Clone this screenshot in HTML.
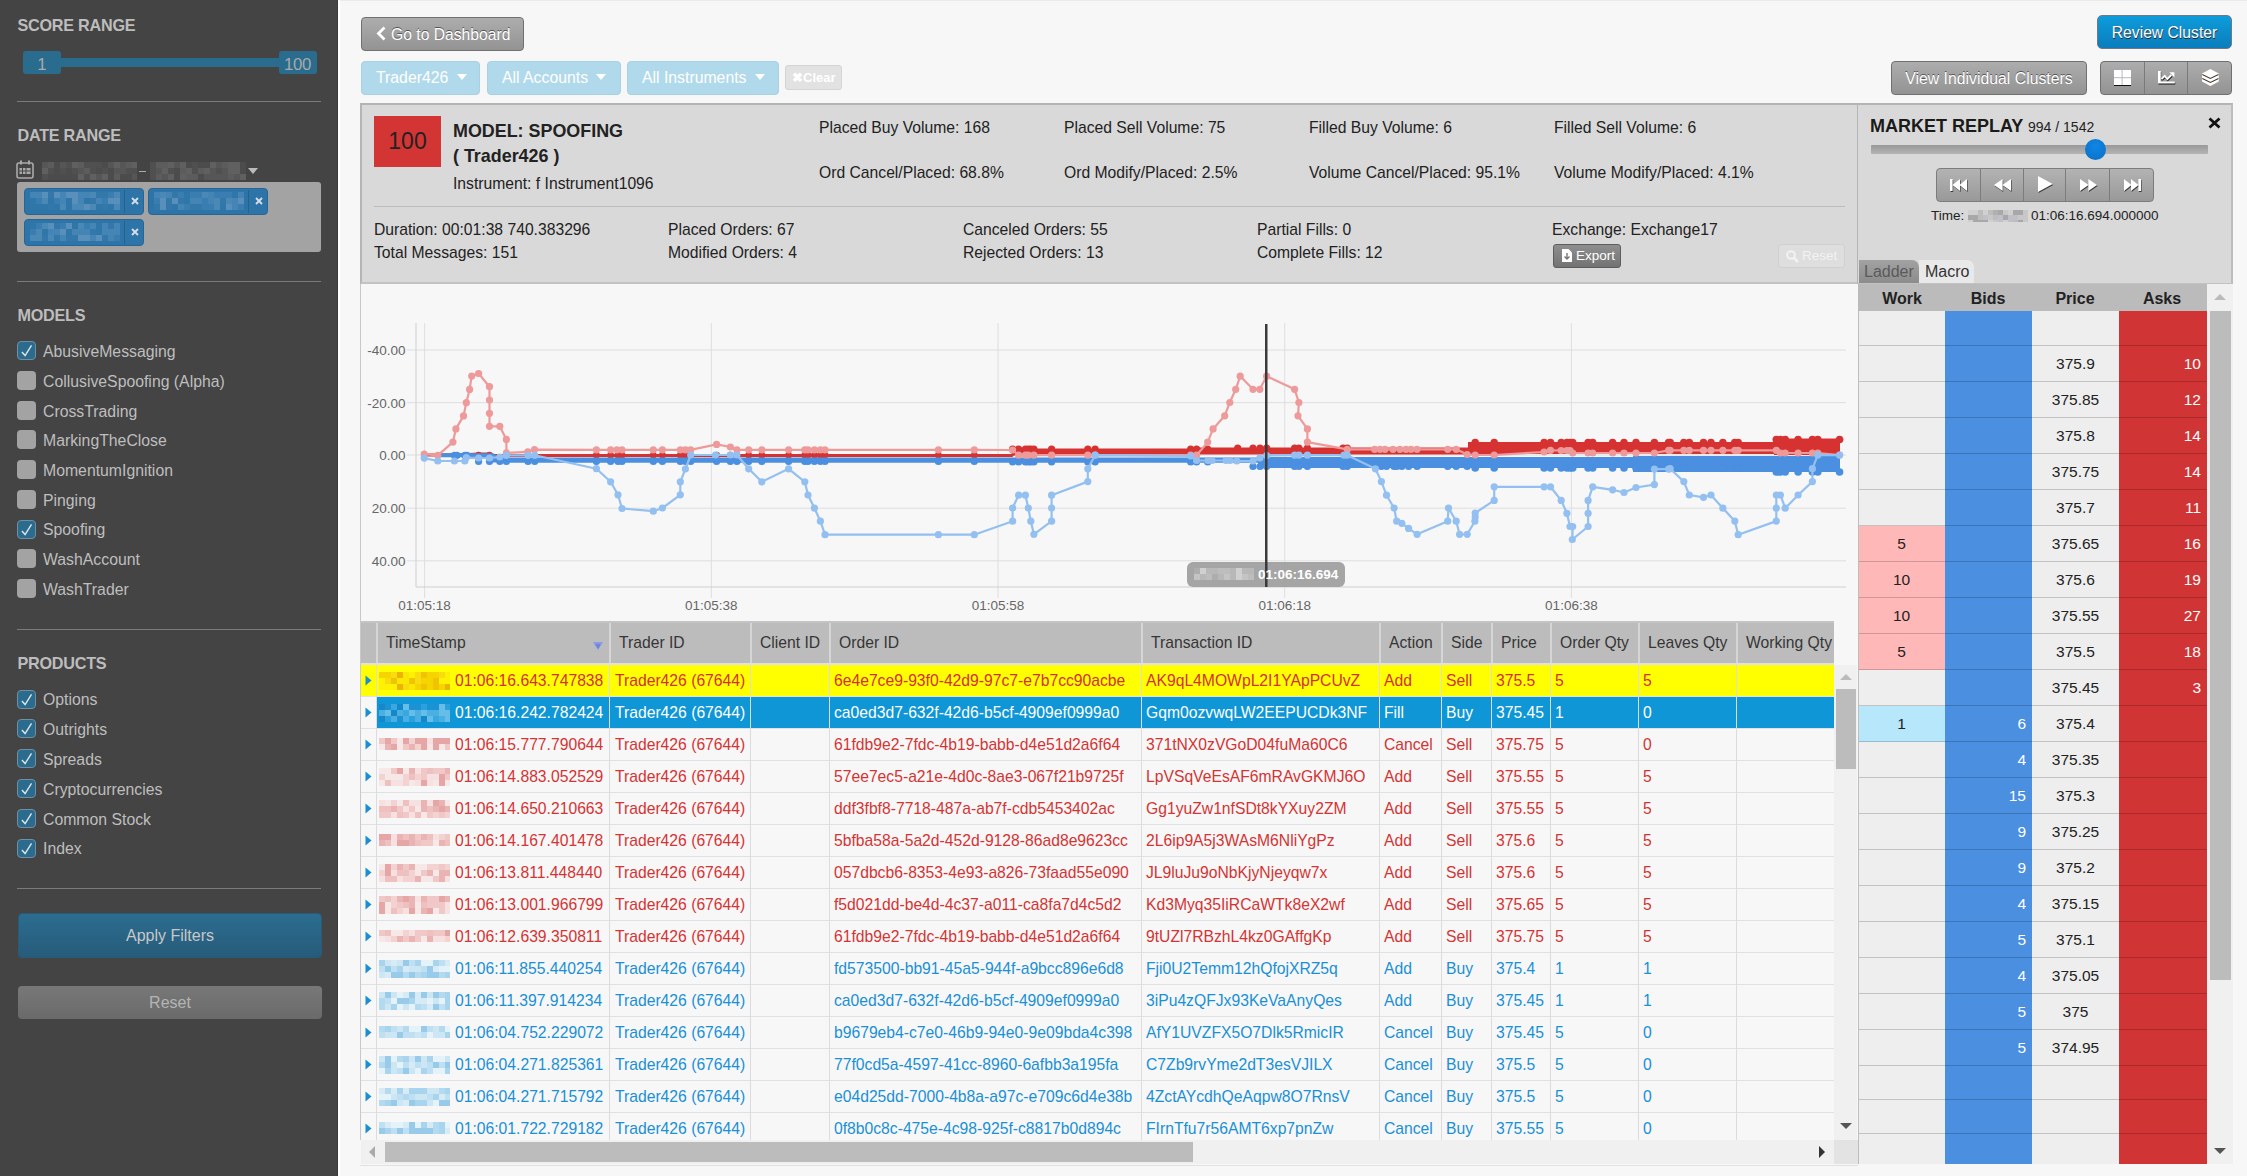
<!DOCTYPE html><html><head><meta charset="utf-8"><style>
*{box-sizing:border-box;margin:0;padding:0}
html,body{width:2247px;height:1176px;overflow:hidden;background:#f7f7f7;font-family:"Liberation Sans",sans-serif;color:#333;position:relative}
.abs{position:absolute}
#side{position:absolute;left:0;top:0;width:338px;height:1176px;background:#444;border-right:1px solid #3a3a3a}
#sideedge{position:absolute;left:338px;top:0;width:2px;height:1176px;background:#fff}
#topline{position:absolute;left:340px;top:0;width:1907px;height:1px;background:#ebebeb}
.sh{position:absolute;left:17.5px;font-weight:bold;font-size:16.2px;color:#bdbdbd;line-height:16px;letter-spacing:-0.25px}
.hr{position:absolute;left:17px;width:304px;height:1px;background:#7a7a7a}
.cb{position:absolute;left:17px;width:19px;height:19px;border-radius:4px;background:#a3a3a3}
.cb.on{background:#2b6c8e;border:1px solid #6f8fa3}
.cb svg{position:absolute;left:-1px;top:-1px}
.cl{position:absolute;left:43px;font-size:15.8px;color:#bebebe;line-height:18px;white-space:nowrap}
.btn{position:absolute;text-align:center;white-space:nowrap}

.gbtn{position:absolute;border:1px solid #707070;border-radius:4px;background:linear-gradient(#adadad,#939393);color:#fff;font-size:16px;text-shadow:0 -1px 0 #555;text-align:center;white-space:nowrap}
.fbtn{position:absolute;border-radius:4px;background:#b0d9ec;border:1px solid #a9d0e3;color:#fff;font-size:15.8px;white-space:nowrap;line-height:32px}
.caret{display:inline-block;width:0;height:0;border-left:5px solid transparent;border-right:5px solid transparent;border-top:6px solid #fff;vertical-align:middle;position:relative;top:-2px}

.st{position:absolute;font-size:15.7px;color:#222;white-space:nowrap;line-height:18px}

.tt{position:absolute;font-size:15.7px;white-space:nowrap;line-height:18px}
</style></head><body>
<div id="side">
<div class="sh" style="top:17px">SCORE RANGE</div>
<div class="abs" style="left:40px;top:58px;width:260px;height:9px;background:#2a6c8e"></div>
<div class="abs" style="left:23px;top:51px;width:38px;height:23px;background:#2a6c8e;border-radius:3px;font-size:16.8px;line-height:27px;text-align:center;color:#a9a9a9">1</div>
<div class="abs" style="left:279px;top:51px;width:38px;height:23px;background:#2a6c8e;border-radius:3px;font-size:16.8px;line-height:27px;text-align:right;padding-right:6px;color:#a9a9a9;letter-spacing:-0.3px">100</div>
<div class="hr" style="top:101px"></div>
<div class="sh" style="top:127px">DATE RANGE</div>
<svg class="abs" style="left:16px;top:160px" width="18" height="19" viewBox="0 0 18 19"><rect x="1" y="3" width="16" height="15" rx="2" fill="none" stroke="#aaa" stroke-width="1.6"/><rect x="4" y="0.5" width="2" height="4" fill="#aaa"/><rect x="12" y="0.5" width="2" height="4" fill="#aaa"/><rect x="3.5" y="8" width="11" height="6" fill="#aaa"/><g fill="#444"><rect x="6" y="8" width="1" height="6"/><rect x="9.5" y="8" width="1" height="6"/><rect x="3.5" y="10.5" width="11" height="1"/></g></svg>
<svg class="abs" style="left:42px;top:162px" width="95" height="18"><rect x="0" y="0" width="6" height="6" fill="#565656"/><rect x="0" y="6" width="6" height="6" fill="#606060"/><rect x="0" y="12" width="6" height="6" fill="#505050"/><rect x="6" y="0" width="6" height="6" fill="#5c5c5c"/><rect x="6" y="6" width="6" height="6" fill="#505050"/><rect x="6" y="12" width="6" height="6" fill="#4c4c4c"/><rect x="12" y="0" width="6" height="6" fill="#4c4c4c"/><rect x="12" y="6" width="6" height="6" fill="#4c4c4c"/><rect x="12" y="12" width="6" height="6" fill="#4c4c4c"/><rect x="18" y="0" width="6" height="6" fill="#565656"/><rect x="18" y="6" width="6" height="6" fill="#505050"/><rect x="18" y="12" width="6" height="6" fill="#4c4c4c"/><rect x="24" y="0" width="6" height="6" fill="#505050"/><rect x="24" y="6" width="6" height="6" fill="#4c4c4c"/><rect x="24" y="12" width="6" height="6" fill="#4c4c4c"/><rect x="30" y="0" width="6" height="6" fill="#606060"/><rect x="30" y="6" width="6" height="6" fill="#505050"/><rect x="30" y="12" width="6" height="6" fill="#4c4c4c"/><rect x="36" y="0" width="6" height="6" fill="#5c5c5c"/><rect x="36" y="6" width="6" height="6" fill="#565656"/><rect x="36" y="12" width="6" height="6" fill="#606060"/><rect x="42" y="0" width="6" height="6" fill="#505050"/><rect x="42" y="6" width="6" height="6" fill="#5c5c5c"/><rect x="42" y="12" width="6" height="6" fill="#505050"/><rect x="48" y="0" width="6" height="6" fill="#505050"/><rect x="48" y="6" width="6" height="6" fill="#505050"/><rect x="48" y="12" width="6" height="6" fill="#606060"/><rect x="54" y="0" width="6" height="6" fill="#505050"/><rect x="54" y="6" width="6" height="6" fill="#4c4c4c"/><rect x="54" y="12" width="6" height="6" fill="#565656"/><rect x="60" y="0" width="6" height="6" fill="#4c4c4c"/><rect x="60" y="6" width="6" height="6" fill="#505050"/><rect x="60" y="12" width="6" height="6" fill="#606060"/><rect x="66" y="0" width="6" height="6" fill="#565656"/><rect x="66" y="6" width="6" height="6" fill="#4c4c4c"/><rect x="66" y="12" width="6" height="6" fill="#4c4c4c"/><rect x="72" y="0" width="6" height="6" fill="#606060"/><rect x="72" y="6" width="6" height="6" fill="#565656"/><rect x="72" y="12" width="6" height="6" fill="#5c5c5c"/><rect x="78" y="0" width="6" height="6" fill="#565656"/><rect x="78" y="6" width="6" height="6" fill="#565656"/><rect x="78" y="12" width="6" height="6" fill="#4c4c4c"/><rect x="84" y="0" width="6" height="6" fill="#5c5c5c"/><rect x="84" y="6" width="6" height="6" fill="#505050"/><rect x="84" y="12" width="6" height="6" fill="#4c4c4c"/><rect x="90" y="0" width="6" height="6" fill="#606060"/><rect x="90" y="6" width="6" height="6" fill="#505050"/><rect x="90" y="12" width="6" height="6" fill="#565656"/></svg>
<div class="abs" style="left:139px;top:171px;width:7px;height:1px;background:#aaa"></div>
<svg class="abs" style="left:150px;top:162px" width="96" height="18"><rect x="0" y="0" width="6" height="6" fill="#505050"/><rect x="0" y="6" width="6" height="6" fill="#505050"/><rect x="0" y="12" width="6" height="6" fill="#505050"/><rect x="6" y="0" width="6" height="6" fill="#5c5c5c"/><rect x="6" y="6" width="6" height="6" fill="#565656"/><rect x="6" y="12" width="6" height="6" fill="#5c5c5c"/><rect x="12" y="0" width="6" height="6" fill="#5c5c5c"/><rect x="12" y="6" width="6" height="6" fill="#606060"/><rect x="12" y="12" width="6" height="6" fill="#565656"/><rect x="18" y="0" width="6" height="6" fill="#606060"/><rect x="18" y="6" width="6" height="6" fill="#505050"/><rect x="18" y="12" width="6" height="6" fill="#606060"/><rect x="24" y="0" width="6" height="6" fill="#565656"/><rect x="24" y="6" width="6" height="6" fill="#4c4c4c"/><rect x="24" y="12" width="6" height="6" fill="#4c4c4c"/><rect x="30" y="0" width="6" height="6" fill="#606060"/><rect x="30" y="6" width="6" height="6" fill="#5c5c5c"/><rect x="30" y="12" width="6" height="6" fill="#606060"/><rect x="36" y="0" width="6" height="6" fill="#4c4c4c"/><rect x="36" y="6" width="6" height="6" fill="#606060"/><rect x="36" y="12" width="6" height="6" fill="#5c5c5c"/><rect x="42" y="0" width="6" height="6" fill="#505050"/><rect x="42" y="6" width="6" height="6" fill="#505050"/><rect x="42" y="12" width="6" height="6" fill="#5c5c5c"/><rect x="48" y="0" width="6" height="6" fill="#4c4c4c"/><rect x="48" y="6" width="6" height="6" fill="#5c5c5c"/><rect x="48" y="12" width="6" height="6" fill="#4c4c4c"/><rect x="54" y="0" width="6" height="6" fill="#4c4c4c"/><rect x="54" y="6" width="6" height="6" fill="#606060"/><rect x="54" y="12" width="6" height="6" fill="#565656"/><rect x="60" y="0" width="6" height="6" fill="#606060"/><rect x="60" y="6" width="6" height="6" fill="#565656"/><rect x="60" y="12" width="6" height="6" fill="#565656"/><rect x="66" y="0" width="6" height="6" fill="#565656"/><rect x="66" y="6" width="6" height="6" fill="#505050"/><rect x="66" y="12" width="6" height="6" fill="#565656"/><rect x="72" y="0" width="6" height="6" fill="#5c5c5c"/><rect x="72" y="6" width="6" height="6" fill="#565656"/><rect x="72" y="12" width="6" height="6" fill="#565656"/><rect x="78" y="0" width="6" height="6" fill="#606060"/><rect x="78" y="6" width="6" height="6" fill="#606060"/><rect x="78" y="12" width="6" height="6" fill="#5c5c5c"/><rect x="84" y="0" width="6" height="6" fill="#606060"/><rect x="84" y="6" width="6" height="6" fill="#606060"/><rect x="84" y="12" width="6" height="6" fill="#565656"/><rect x="90" y="0" width="6" height="6" fill="#4c4c4c"/><rect x="90" y="6" width="6" height="6" fill="#4c4c4c"/><rect x="90" y="12" width="6" height="6" fill="#606060"/></svg>
<div class="abs" style="left:248px;top:168px;width:0;height:0;border-left:5px solid transparent;border-right:5px solid transparent;border-top:6px solid #bbb"></div>
<div class="abs" style="left:17px;top:182px;width:304px;height:70px;background:#a3a3a3;border-radius:3px"></div>
<div class="abs" style="left:24px;top:188px;width:120px;height:27px;background:#2d74a8;border:1px solid #286594;border-radius:4px;"></div><svg class="abs" style="left:30px;top:192px" width="90" height="18"><rect x="0" y="0" width="6" height="6" fill="#4585b5"/><rect x="0" y="6" width="6" height="6" fill="#2f76a9"/><rect x="0" y="12" width="6" height="6" fill="#2f76a9"/><rect x="6" y="0" width="6" height="6" fill="#4585b5"/><rect x="6" y="6" width="6" height="6" fill="#3a7db0"/><rect x="6" y="12" width="6" height="6" fill="#2f76a9"/><rect x="12" y="0" width="6" height="6" fill="#5890bb"/><rect x="12" y="6" width="6" height="6" fill="#4a88b6"/><rect x="12" y="12" width="6" height="6" fill="#2f76a9"/><rect x="18" y="0" width="6" height="6" fill="#3478aa"/><rect x="18" y="6" width="6" height="6" fill="#2f76a9"/><rect x="18" y="12" width="6" height="6" fill="#3478aa"/><rect x="24" y="0" width="6" height="6" fill="#5890bb"/><rect x="24" y="6" width="6" height="6" fill="#3a7db0"/><rect x="24" y="12" width="6" height="6" fill="#2f76a9"/><rect x="30" y="0" width="6" height="6" fill="#4585b5"/><rect x="30" y="6" width="6" height="6" fill="#4585b5"/><rect x="30" y="12" width="6" height="6" fill="#4a88b6"/><rect x="36" y="0" width="6" height="6" fill="#5890bb"/><rect x="36" y="6" width="6" height="6" fill="#2f76a9"/><rect x="36" y="12" width="6" height="6" fill="#2f76a9"/><rect x="42" y="0" width="6" height="6" fill="#5890bb"/><rect x="42" y="6" width="6" height="6" fill="#5890bb"/><rect x="42" y="12" width="6" height="6" fill="#4a88b6"/><rect x="48" y="0" width="6" height="6" fill="#4585b5"/><rect x="48" y="6" width="6" height="6" fill="#4585b5"/><rect x="48" y="12" width="6" height="6" fill="#4a88b6"/><rect x="54" y="0" width="6" height="6" fill="#4585b5"/><rect x="54" y="6" width="6" height="6" fill="#2f76a9"/><rect x="54" y="12" width="6" height="6" fill="#5890bb"/><rect x="60" y="0" width="6" height="6" fill="#4a88b6"/><rect x="60" y="6" width="6" height="6" fill="#3478aa"/><rect x="60" y="12" width="6" height="6" fill="#4a88b6"/><rect x="66" y="0" width="6" height="6" fill="#3478aa"/><rect x="66" y="6" width="6" height="6" fill="#4585b5"/><rect x="66" y="12" width="6" height="6" fill="#2f76a9"/><rect x="72" y="0" width="6" height="6" fill="#3478aa"/><rect x="72" y="6" width="6" height="6" fill="#3a7db0"/><rect x="72" y="12" width="6" height="6" fill="#3478aa"/><rect x="78" y="0" width="6" height="6" fill="#3a7db0"/><rect x="78" y="6" width="6" height="6" fill="#5890bb"/><rect x="78" y="12" width="6" height="6" fill="#2f76a9"/><rect x="84" y="0" width="6" height="6" fill="#4a88b6"/><rect x="84" y="6" width="6" height="6" fill="#5890bb"/><rect x="84" y="12" width="6" height="6" fill="#4a88b6"/></svg><div class="abs" style="left:124px;top:190px;width:1px;height:23px;background:#2a5f88"></div><svg class="abs" style="left:131px;top:197px" width="8" height="8" viewBox="0 0 8 8"><path d="M1 1 L7 7 M7 1 L1 7" stroke="#d6dde4" stroke-width="1.9"/></svg>
<div class="abs" style="left:148px;top:188px;width:120px;height:27px;background:#2d74a8;border:1px solid #286594;border-radius:4px;"></div><svg class="abs" style="left:154px;top:192px" width="90" height="18"><rect x="0" y="0" width="6" height="6" fill="#4585b5"/><rect x="0" y="6" width="6" height="6" fill="#3a7db0"/><rect x="0" y="12" width="6" height="6" fill="#3478aa"/><rect x="6" y="0" width="6" height="6" fill="#4a88b6"/><rect x="6" y="6" width="6" height="6" fill="#5890bb"/><rect x="6" y="12" width="6" height="6" fill="#5890bb"/><rect x="12" y="0" width="6" height="6" fill="#4585b5"/><rect x="12" y="6" width="6" height="6" fill="#3478aa"/><rect x="12" y="12" width="6" height="6" fill="#3478aa"/><rect x="18" y="0" width="6" height="6" fill="#3478aa"/><rect x="18" y="6" width="6" height="6" fill="#5890bb"/><rect x="18" y="12" width="6" height="6" fill="#2f76a9"/><rect x="24" y="0" width="6" height="6" fill="#3a7db0"/><rect x="24" y="6" width="6" height="6" fill="#3478aa"/><rect x="24" y="12" width="6" height="6" fill="#4585b5"/><rect x="30" y="0" width="6" height="6" fill="#2f76a9"/><rect x="30" y="6" width="6" height="6" fill="#2f76a9"/><rect x="30" y="12" width="6" height="6" fill="#3a7db0"/><rect x="36" y="0" width="6" height="6" fill="#3a7db0"/><rect x="36" y="6" width="6" height="6" fill="#4585b5"/><rect x="36" y="12" width="6" height="6" fill="#3478aa"/><rect x="42" y="0" width="6" height="6" fill="#3a7db0"/><rect x="42" y="6" width="6" height="6" fill="#4585b5"/><rect x="42" y="12" width="6" height="6" fill="#3478aa"/><rect x="48" y="0" width="6" height="6" fill="#4a88b6"/><rect x="48" y="6" width="6" height="6" fill="#3a7db0"/><rect x="48" y="12" width="6" height="6" fill="#3a7db0"/><rect x="54" y="0" width="6" height="6" fill="#4585b5"/><rect x="54" y="6" width="6" height="6" fill="#4585b5"/><rect x="54" y="12" width="6" height="6" fill="#3a7db0"/><rect x="60" y="0" width="6" height="6" fill="#3a7db0"/><rect x="60" y="6" width="6" height="6" fill="#4a88b6"/><rect x="60" y="12" width="6" height="6" fill="#4a88b6"/><rect x="66" y="0" width="6" height="6" fill="#3a7db0"/><rect x="66" y="6" width="6" height="6" fill="#3478aa"/><rect x="66" y="12" width="6" height="6" fill="#2f76a9"/><rect x="72" y="0" width="6" height="6" fill="#3a7db0"/><rect x="72" y="6" width="6" height="6" fill="#4a88b6"/><rect x="72" y="12" width="6" height="6" fill="#5890bb"/><rect x="78" y="0" width="6" height="6" fill="#2f76a9"/><rect x="78" y="6" width="6" height="6" fill="#4585b5"/><rect x="78" y="12" width="6" height="6" fill="#4585b5"/><rect x="84" y="0" width="6" height="6" fill="#4585b5"/><rect x="84" y="6" width="6" height="6" fill="#5890bb"/><rect x="84" y="12" width="6" height="6" fill="#3a7db0"/></svg><div class="abs" style="left:248px;top:190px;width:1px;height:23px;background:#2a5f88"></div><svg class="abs" style="left:255px;top:197px" width="8" height="8" viewBox="0 0 8 8"><path d="M1 1 L7 7 M7 1 L1 7" stroke="#d6dde4" stroke-width="1.9"/></svg>
<div class="abs" style="left:24px;top:219px;width:120px;height:27px;background:#2d74a8;border:1px solid #286594;border-radius:4px;"></div><svg class="abs" style="left:30px;top:223px" width="90" height="18"><rect x="0" y="0" width="6" height="6" fill="#2f76a9"/><rect x="0" y="6" width="6" height="6" fill="#3a7db0"/><rect x="0" y="12" width="6" height="6" fill="#4a88b6"/><rect x="6" y="0" width="6" height="6" fill="#3a7db0"/><rect x="6" y="6" width="6" height="6" fill="#4a88b6"/><rect x="6" y="12" width="6" height="6" fill="#4a88b6"/><rect x="12" y="0" width="6" height="6" fill="#4a88b6"/><rect x="12" y="6" width="6" height="6" fill="#2f76a9"/><rect x="12" y="12" width="6" height="6" fill="#3478aa"/><rect x="18" y="0" width="6" height="6" fill="#5890bb"/><rect x="18" y="6" width="6" height="6" fill="#4585b5"/><rect x="18" y="12" width="6" height="6" fill="#4a88b6"/><rect x="24" y="0" width="6" height="6" fill="#3478aa"/><rect x="24" y="6" width="6" height="6" fill="#4585b5"/><rect x="24" y="12" width="6" height="6" fill="#3478aa"/><rect x="30" y="0" width="6" height="6" fill="#3a7db0"/><rect x="30" y="6" width="6" height="6" fill="#5890bb"/><rect x="30" y="12" width="6" height="6" fill="#4585b5"/><rect x="36" y="0" width="6" height="6" fill="#5890bb"/><rect x="36" y="6" width="6" height="6" fill="#2f76a9"/><rect x="36" y="12" width="6" height="6" fill="#3478aa"/><rect x="42" y="0" width="6" height="6" fill="#2f76a9"/><rect x="42" y="6" width="6" height="6" fill="#4585b5"/><rect x="42" y="12" width="6" height="6" fill="#3478aa"/><rect x="48" y="0" width="6" height="6" fill="#4a88b6"/><rect x="48" y="6" width="6" height="6" fill="#4585b5"/><rect x="48" y="12" width="6" height="6" fill="#5890bb"/><rect x="54" y="0" width="6" height="6" fill="#3a7db0"/><rect x="54" y="6" width="6" height="6" fill="#4585b5"/><rect x="54" y="12" width="6" height="6" fill="#5890bb"/><rect x="60" y="0" width="6" height="6" fill="#4585b5"/><rect x="60" y="6" width="6" height="6" fill="#3478aa"/><rect x="60" y="12" width="6" height="6" fill="#4585b5"/><rect x="66" y="0" width="6" height="6" fill="#2f76a9"/><rect x="66" y="6" width="6" height="6" fill="#2f76a9"/><rect x="66" y="12" width="6" height="6" fill="#5890bb"/><rect x="72" y="0" width="6" height="6" fill="#4585b5"/><rect x="72" y="6" width="6" height="6" fill="#4585b5"/><rect x="72" y="12" width="6" height="6" fill="#3478aa"/><rect x="78" y="0" width="6" height="6" fill="#3478aa"/><rect x="78" y="6" width="6" height="6" fill="#4585b5"/><rect x="78" y="12" width="6" height="6" fill="#4585b5"/><rect x="84" y="0" width="6" height="6" fill="#4585b5"/><rect x="84" y="6" width="6" height="6" fill="#4585b5"/><rect x="84" y="12" width="6" height="6" fill="#3a7db0"/></svg><div class="abs" style="left:124px;top:221px;width:1px;height:23px;background:#2a5f88"></div><svg class="abs" style="left:131px;top:228px" width="8" height="8" viewBox="0 0 8 8"><path d="M1 1 L7 7 M7 1 L1 7" stroke="#d6dde4" stroke-width="1.9"/></svg>
<div class="hr" style="top:281px"></div>
<div class="sh" style="top:307px">MODELS</div>
<div class="cb on" style="top:341.3px"><svg width="19" height="19" viewBox="0 0 19 19"><path d="M4.9 11.1 L8.1 14.5 L14.5 4.3" fill="none" stroke="#dfe6ea" stroke-width="1.4"/></svg></div><div class="cl" style="top:343.1px">AbusiveMessaging</div>
<div class="cb" style="top:371.0px"></div><div class="cl" style="top:372.8px">CollusiveSpoofing (Alpha)</div>
<div class="cb" style="top:400.7px"></div><div class="cl" style="top:402.5px">CrossTrading</div>
<div class="cb" style="top:430.4px"></div><div class="cl" style="top:432.2px">MarkingTheClose</div>
<div class="cb" style="top:460.1px"></div><div class="cl" style="top:461.9px">MomentumIgnition</div>
<div class="cb" style="top:489.8px"></div><div class="cl" style="top:491.6px">Pinging</div>
<div class="cb on" style="top:519.5px"><svg width="19" height="19" viewBox="0 0 19 19"><path d="M4.9 11.1 L8.1 14.5 L14.5 4.3" fill="none" stroke="#dfe6ea" stroke-width="1.4"/></svg></div><div class="cl" style="top:521.3px">Spoofing</div>
<div class="cb" style="top:549.2px"></div><div class="cl" style="top:551.0px">WashAccount</div>
<div class="cb" style="top:578.9px"></div><div class="cl" style="top:580.7px">WashTrader</div>
<div class="hr" style="top:629px"></div>
<div class="sh" style="top:655px">PRODUCTS</div>
<div class="cb on" style="top:689.5px"><svg width="19" height="19" viewBox="0 0 19 19"><path d="M4.9 11.1 L8.1 14.5 L14.5 4.3" fill="none" stroke="#dfe6ea" stroke-width="1.4"/></svg></div><div class="cl" style="top:691.3px">Options</div>
<div class="cb on" style="top:719.3px"><svg width="19" height="19" viewBox="0 0 19 19"><path d="M4.9 11.1 L8.1 14.5 L14.5 4.3" fill="none" stroke="#dfe6ea" stroke-width="1.4"/></svg></div><div class="cl" style="top:721.1px">Outrights</div>
<div class="cb on" style="top:749.1px"><svg width="19" height="19" viewBox="0 0 19 19"><path d="M4.9 11.1 L8.1 14.5 L14.5 4.3" fill="none" stroke="#dfe6ea" stroke-width="1.4"/></svg></div><div class="cl" style="top:750.9px">Spreads</div>
<div class="cb on" style="top:778.9px"><svg width="19" height="19" viewBox="0 0 19 19"><path d="M4.9 11.1 L8.1 14.5 L14.5 4.3" fill="none" stroke="#dfe6ea" stroke-width="1.4"/></svg></div><div class="cl" style="top:780.7px">Cryptocurrencies</div>
<div class="cb on" style="top:808.7px"><svg width="19" height="19" viewBox="0 0 19 19"><path d="M4.9 11.1 L8.1 14.5 L14.5 4.3" fill="none" stroke="#dfe6ea" stroke-width="1.4"/></svg></div><div class="cl" style="top:810.5px">Common Stock</div>
<div class="cb on" style="top:838.5px"><svg width="19" height="19" viewBox="0 0 19 19"><path d="M4.9 11.1 L8.1 14.5 L14.5 4.3" fill="none" stroke="#dfe6ea" stroke-width="1.4"/></svg></div><div class="cl" style="top:840.3px">Index</div>
<div class="hr" style="top:888px"></div>
<div class="btn" style="left:18px;top:913px;width:304px;height:45px;border-radius:4px;background:linear-gradient(#2b6d90,#275b7a);border:1px solid #2a5a78;color:#c8c8c8;font-size:16px;line-height:43px">Apply Filters</div>
<div class="btn" style="left:18px;top:986px;width:304px;height:33px;border-radius:4px;background:linear-gradient(#787878,#6a6a6a);color:#b4b4b4;font-size:16px;line-height:34px">Reset</div>
</div>
<div id="sideedge"></div><div id="topline"></div>
<svg class="abs" style="left:0;top:0" width="2247" height="1176" viewBox="0 0 2247 1176"><rect x="360" y="284" width="1" height="337" fill="#c8c8c8"/><rect x="407" y="349.5" width="1439" height="1" fill="#dedede"/><rect x="407" y="402.1" width="1439" height="1" fill="#dedede"/><rect x="407" y="454.5" width="1439" height="1" fill="#dedede"/><rect x="407" y="507.7" width="1439" height="1" fill="#dedede"/><rect x="407" y="560.3" width="1439" height="1" fill="#dedede"/><rect x="424.1" y="323" width="1" height="275" fill="#dedede"/><rect x="710.8" y="323" width="1" height="275" fill="#dedede"/><rect x="997.5" y="323" width="1" height="275" fill="#dedede"/><rect x="1284.2" y="323" width="1" height="275" fill="#dedede"/><rect x="1570.9" y="323" width="1" height="275" fill="#dedede"/><rect x="415.5" y="323" width="1" height="264" fill="#d0d0d0"/><rect x="416" y="586.5" width="1430" height="1" fill="#d0d0d0"/><text x="405.5" y="355" text-anchor="end" font-family="Liberation Sans" font-size="13.5" fill="#666">-40.00</text><text x="405.5" y="407.6" text-anchor="end" font-family="Liberation Sans" font-size="13.5" fill="#666">-20.00</text><text x="405.5" y="460" text-anchor="end" font-family="Liberation Sans" font-size="13.5" fill="#666">0.00</text><text x="405.5" y="513.2" text-anchor="end" font-family="Liberation Sans" font-size="13.5" fill="#666">20.00</text><text x="405.5" y="565.8" text-anchor="end" font-family="Liberation Sans" font-size="13.5" fill="#666">40.00</text><text x="424.6" y="610" text-anchor="middle" font-family="Liberation Sans" font-size="13.5" fill="#666">01:05:18</text><text x="711.3" y="610" text-anchor="middle" font-family="Liberation Sans" font-size="13.5" fill="#666">01:05:38</text><text x="998" y="610" text-anchor="middle" font-family="Liberation Sans" font-size="13.5" fill="#666">01:05:58</text><text x="1284.7" y="610" text-anchor="middle" font-family="Liberation Sans" font-size="13.5" fill="#666">01:06:18</text><text x="1571.4" y="610" text-anchor="middle" font-family="Liberation Sans" font-size="13.5" fill="#666">01:06:38</text><polyline points="424.2,455.0 437.8,455.0 469.0,454.5 478.6,454.1 489.5,454.1 493.0,455.4 1012.0,455.4 1014.0,452.0 1196.0,452.0 1200.0,451.0 1466.0,451.0 1470.0,448.0 1772.0,448.0 1776.0,446.5 1839.6,446.5" fill="none" stroke="#d63232" stroke-width="3" stroke-linejoin="round"/><rect x="1012" y="448.5" width="184" height="7" fill="#d63232"/><rect x="1196" y="447.5" width="272" height="7" fill="#d63232"/><rect x="1468" y="442" width="306" height="12" fill="#d63232"/><rect x="1774" y="438.5" width="66" height="16.5" fill="#d63232"/><circle cx="478.6" cy="455.2" r="3.4" fill="#d63232"/><circle cx="489.5" cy="455.2" r="3.4" fill="#d63232"/><circle cx="596.4" cy="455.2" r="3.4" fill="#d63232"/><circle cx="610.6" cy="455.2" r="3.4" fill="#d63232"/><circle cx="618.0" cy="455.2" r="3.4" fill="#d63232"/><circle cx="622.0" cy="455.2" r="3.4" fill="#d63232"/><circle cx="653.3" cy="455.2" r="3.4" fill="#d63232"/><circle cx="662.4" cy="455.2" r="3.4" fill="#d63232"/><circle cx="680.3" cy="455.2" r="3.4" fill="#d63232"/><circle cx="685.4" cy="455.2" r="3.4" fill="#d63232"/><circle cx="690.7" cy="455.2" r="3.4" fill="#d63232"/><circle cx="716.6" cy="455.2" r="3.4" fill="#d63232"/><circle cx="730.4" cy="455.2" r="3.4" fill="#d63232"/><circle cx="736.9" cy="455.2" r="3.4" fill="#d63232"/><circle cx="748.7" cy="455.2" r="3.4" fill="#d63232"/><circle cx="761.8" cy="455.2" r="3.4" fill="#d63232"/><circle cx="788.6" cy="455.2" r="3.4" fill="#d63232"/><circle cx="804.8" cy="455.2" r="3.4" fill="#d63232"/><circle cx="808.0" cy="455.2" r="3.4" fill="#d63232"/><circle cx="814.4" cy="455.2" r="3.4" fill="#d63232"/><circle cx="820.4" cy="455.2" r="3.4" fill="#d63232"/><circle cx="825.0" cy="455.2" r="3.4" fill="#d63232"/><circle cx="938.4" cy="455.2" r="3.4" fill="#d63232"/><circle cx="974.3" cy="455.2" r="3.4" fill="#d63232"/><circle cx="1012.6" cy="449.0" r="3.6" fill="#d63232"/><circle cx="1018.6" cy="449.0" r="3.6" fill="#d63232"/><circle cx="1025.4" cy="449.0" r="3.6" fill="#d63232"/><circle cx="1028.3" cy="449.0" r="3.6" fill="#d63232"/><circle cx="1030.8" cy="449.0" r="3.6" fill="#d63232"/><circle cx="1033.9" cy="449.0" r="3.6" fill="#d63232"/><circle cx="1051.6" cy="449.0" r="3.6" fill="#d63232"/><circle cx="1087.8" cy="449.0" r="3.6" fill="#d63232"/><circle cx="1095.1" cy="449.0" r="3.6" fill="#d63232"/><circle cx="1190.7" cy="449.0" r="3.6" fill="#d63232"/><circle cx="1196.6" cy="449.0" r="3.6" fill="#d63232"/><circle cx="1207.7" cy="449.0" r="3.6" fill="#d63232"/><circle cx="1237.7" cy="448.0" r="3.6" fill="#d63232"/><circle cx="1253.0" cy="448.0" r="3.6" fill="#d63232"/><circle cx="1260.0" cy="448.0" r="3.6" fill="#d63232"/><circle cx="1266.6" cy="448.0" r="3.6" fill="#d63232"/><circle cx="1294.6" cy="448.0" r="3.6" fill="#d63232"/><circle cx="1298.9" cy="448.0" r="3.6" fill="#d63232"/><circle cx="1307.4" cy="448.0" r="3.6" fill="#d63232"/><circle cx="1343.0" cy="448.0" r="3.6" fill="#d63232"/><circle cx="1347.3" cy="448.0" r="3.6" fill="#d63232"/><circle cx="1475.2" cy="442.5" r="3.8" fill="#d63232"/><circle cx="1494.2" cy="442.5" r="3.8" fill="#d63232"/><circle cx="1544.1" cy="442.5" r="3.8" fill="#d63232"/><circle cx="1550.5" cy="442.5" r="3.8" fill="#d63232"/><circle cx="1561.2" cy="442.5" r="3.8" fill="#d63232"/><circle cx="1566.9" cy="442.5" r="3.8" fill="#d63232"/><circle cx="1570.0" cy="442.5" r="3.8" fill="#d63232"/><circle cx="1572.7" cy="442.5" r="3.8" fill="#d63232"/><circle cx="1588.1" cy="442.5" r="3.8" fill="#d63232"/><circle cx="1592.7" cy="442.5" r="3.8" fill="#d63232"/><circle cx="1612.6" cy="442.5" r="3.8" fill="#d63232"/><circle cx="1624.0" cy="442.5" r="3.8" fill="#d63232"/><circle cx="1636.0" cy="442.5" r="3.8" fill="#d63232"/><circle cx="1654.4" cy="442.5" r="3.8" fill="#d63232"/><circle cx="1668.6" cy="442.5" r="3.8" fill="#d63232"/><circle cx="1670.2" cy="442.5" r="3.8" fill="#d63232"/><circle cx="1683.8" cy="442.5" r="3.8" fill="#d63232"/><circle cx="1689.3" cy="442.5" r="3.8" fill="#d63232"/><circle cx="1703.5" cy="442.5" r="3.8" fill="#d63232"/><circle cx="1711.0" cy="442.5" r="3.8" fill="#d63232"/><circle cx="1722.9" cy="442.5" r="3.8" fill="#d63232"/><circle cx="1734.8" cy="442.5" r="3.8" fill="#d63232"/><circle cx="1738.2" cy="442.5" r="3.8" fill="#d63232"/><circle cx="1776.3" cy="439.5" r="3.8" fill="#d63232"/><circle cx="1780.4" cy="439.5" r="3.8" fill="#d63232"/><circle cx="1785.2" cy="439.5" r="3.8" fill="#d63232"/><circle cx="1798.1" cy="439.5" r="3.8" fill="#d63232"/><circle cx="1812.4" cy="439.5" r="3.8" fill="#d63232"/><circle cx="1817.8" cy="439.5" r="3.8" fill="#d63232"/><circle cx="1839.6" cy="439.5" r="3.8" fill="#d63232"/><polyline points="437.8,455.3 493.0,455.3 499.8,460.5 1258.0,460.5" fill="none" stroke="#4a8fe0" stroke-width="4" stroke-linejoin="round"/><rect x="493" y="457.5" width="765" height="5" fill="#4a8fe0"/><rect x="1258" y="457" width="375" height="11" fill="#4a8fe0"/><polygon points="1633,456 1840,456 1840,472 1633,472 1633,468" fill="#4a8fe0"/><circle cx="454.4" cy="455.3" r="3.6" fill="#4a8fe0"/><circle cx="457.0" cy="455.3" r="3.6" fill="#4a8fe0"/><circle cx="464.8" cy="455.3" r="3.6" fill="#4a8fe0"/><circle cx="467.0" cy="455.3" r="3.6" fill="#4a8fe0"/><circle cx="478.6" cy="461.5" r="3.6" fill="#4a8fe0"/><circle cx="489.5" cy="461.5" r="3.6" fill="#4a8fe0"/><circle cx="596.4" cy="461.5" r="3.6" fill="#4a8fe0"/><circle cx="610.6" cy="461.5" r="3.6" fill="#4a8fe0"/><circle cx="618.0" cy="461.5" r="3.6" fill="#4a8fe0"/><circle cx="622.0" cy="461.5" r="3.6" fill="#4a8fe0"/><circle cx="653.3" cy="461.5" r="3.6" fill="#4a8fe0"/><circle cx="662.4" cy="461.5" r="3.6" fill="#4a8fe0"/><circle cx="680.3" cy="461.5" r="3.6" fill="#4a8fe0"/><circle cx="685.4" cy="461.5" r="3.6" fill="#4a8fe0"/><circle cx="690.7" cy="461.5" r="3.6" fill="#4a8fe0"/><circle cx="716.6" cy="461.5" r="3.6" fill="#4a8fe0"/><circle cx="730.4" cy="461.5" r="3.6" fill="#4a8fe0"/><circle cx="736.9" cy="461.5" r="3.6" fill="#4a8fe0"/><circle cx="748.7" cy="461.5" r="3.6" fill="#4a8fe0"/><circle cx="761.8" cy="461.5" r="3.6" fill="#4a8fe0"/><circle cx="788.6" cy="461.5" r="3.6" fill="#4a8fe0"/><circle cx="804.8" cy="461.5" r="3.6" fill="#4a8fe0"/><circle cx="808.0" cy="461.5" r="3.6" fill="#4a8fe0"/><circle cx="814.4" cy="461.5" r="3.6" fill="#4a8fe0"/><circle cx="820.4" cy="461.5" r="3.6" fill="#4a8fe0"/><circle cx="825.0" cy="461.5" r="3.6" fill="#4a8fe0"/><circle cx="938.4" cy="461.5" r="3.6" fill="#4a8fe0"/><circle cx="974.3" cy="461.5" r="3.6" fill="#4a8fe0"/><circle cx="499.8" cy="461.5" r="3.6" fill="#4a8fe0"/><circle cx="506.4" cy="461.5" r="3.6" fill="#4a8fe0"/><circle cx="528.0" cy="461.5" r="3.6" fill="#4a8fe0"/><circle cx="534.7" cy="461.5" r="3.6" fill="#4a8fe0"/><circle cx="1012.6" cy="462.0" r="3.6" fill="#4a8fe0"/><circle cx="1018.6" cy="462.0" r="3.6" fill="#4a8fe0"/><circle cx="1025.4" cy="462.0" r="3.6" fill="#4a8fe0"/><circle cx="1028.3" cy="462.0" r="3.6" fill="#4a8fe0"/><circle cx="1030.8" cy="462.0" r="3.6" fill="#4a8fe0"/><circle cx="1033.9" cy="462.0" r="3.6" fill="#4a8fe0"/><circle cx="1051.6" cy="462.0" r="3.6" fill="#4a8fe0"/><circle cx="1087.8" cy="462.0" r="3.6" fill="#4a8fe0"/><circle cx="1095.1" cy="462.0" r="3.6" fill="#4a8fe0"/><circle cx="1190.7" cy="462.0" r="3.6" fill="#4a8fe0"/><circle cx="1196.6" cy="462.0" r="3.6" fill="#4a8fe0"/><circle cx="1207.7" cy="462.0" r="3.6" fill="#4a8fe0"/><circle cx="1253.0" cy="466.5" r="3.6" fill="#4a8fe0"/><circle cx="1260.0" cy="466.5" r="3.6" fill="#4a8fe0"/><circle cx="1266.6" cy="466.5" r="3.6" fill="#4a8fe0"/><circle cx="1294.6" cy="466.5" r="3.6" fill="#4a8fe0"/><circle cx="1298.9" cy="466.5" r="3.6" fill="#4a8fe0"/><circle cx="1307.4" cy="466.5" r="3.6" fill="#4a8fe0"/><circle cx="1343.0" cy="466.5" r="3.6" fill="#4a8fe0"/><circle cx="1347.3" cy="466.5" r="3.6" fill="#4a8fe0"/><circle cx="1375.4" cy="466.5" r="3.6" fill="#4a8fe0"/><circle cx="1381.4" cy="466.5" r="3.6" fill="#4a8fe0"/><circle cx="1386.5" cy="466.5" r="3.6" fill="#4a8fe0"/><circle cx="1394.1" cy="466.5" r="3.6" fill="#4a8fe0"/><circle cx="1396.7" cy="466.5" r="3.6" fill="#4a8fe0"/><circle cx="1401.8" cy="466.5" r="3.6" fill="#4a8fe0"/><circle cx="1408.6" cy="466.5" r="3.6" fill="#4a8fe0"/><circle cx="1417.1" cy="466.5" r="3.6" fill="#4a8fe0"/><circle cx="1447.7" cy="466.5" r="3.6" fill="#4a8fe0"/><circle cx="1456.2" cy="466.5" r="3.6" fill="#4a8fe0"/><circle cx="1467.2" cy="466.5" r="3.6" fill="#4a8fe0"/><circle cx="1475.2" cy="468.0" r="3.8" fill="#4a8fe0"/><circle cx="1494.2" cy="468.0" r="3.8" fill="#4a8fe0"/><circle cx="1544.1" cy="468.0" r="3.8" fill="#4a8fe0"/><circle cx="1550.5" cy="468.0" r="3.8" fill="#4a8fe0"/><circle cx="1561.2" cy="468.0" r="3.8" fill="#4a8fe0"/><circle cx="1566.9" cy="468.0" r="3.8" fill="#4a8fe0"/><circle cx="1570.0" cy="468.0" r="3.8" fill="#4a8fe0"/><circle cx="1572.7" cy="468.0" r="3.8" fill="#4a8fe0"/><circle cx="1588.1" cy="468.0" r="3.8" fill="#4a8fe0"/><circle cx="1592.7" cy="468.0" r="3.8" fill="#4a8fe0"/><circle cx="1612.6" cy="468.0" r="3.8" fill="#4a8fe0"/><circle cx="1624.0" cy="468.0" r="3.8" fill="#4a8fe0"/><circle cx="1636.0" cy="468.0" r="3.8" fill="#4a8fe0"/><circle cx="1654.4" cy="468.0" r="3.8" fill="#4a8fe0"/><circle cx="1668.6" cy="468.0" r="3.8" fill="#4a8fe0"/><circle cx="1670.2" cy="468.0" r="3.8" fill="#4a8fe0"/><circle cx="1683.8" cy="468.0" r="3.8" fill="#4a8fe0"/><circle cx="1689.3" cy="468.0" r="3.8" fill="#4a8fe0"/><circle cx="1703.5" cy="468.0" r="3.8" fill="#4a8fe0"/><circle cx="1711.0" cy="468.0" r="3.8" fill="#4a8fe0"/><circle cx="1722.9" cy="468.0" r="3.8" fill="#4a8fe0"/><circle cx="1734.8" cy="468.0" r="3.8" fill="#4a8fe0"/><circle cx="1738.2" cy="468.0" r="3.8" fill="#4a8fe0"/><circle cx="1776.3" cy="472.0" r="3.8" fill="#4a8fe0"/><circle cx="1780.4" cy="472.0" r="3.8" fill="#4a8fe0"/><circle cx="1785.2" cy="472.0" r="3.8" fill="#4a8fe0"/><circle cx="1798.1" cy="472.0" r="3.8" fill="#4a8fe0"/><circle cx="1812.4" cy="472.0" r="3.8" fill="#4a8fe0"/><circle cx="1817.8" cy="472.0" r="3.8" fill="#4a8fe0"/><circle cx="1839.6" cy="472.0" r="3.8" fill="#4a8fe0"/><polyline points="424.2,454.1 437.8,455.3 452.9,442.1 455.9,428.9 463.5,415.9 466.3,402.7 469.6,389.4 471.7,376.1 478.6,373.5 489.5,386.7 489.5,400.0 489.5,413.3 489.5,426.3 499.8,426.3 506.4,439.4 506.4,452.9 527.8,451.8 534.5,449.6 596.4,449.8 610.6,449.8 617.0,449.8 622.0,449.8 653.3,449.8 662.4,449.8 680.3,449.8 685.4,449.8 690.7,449.8 716.6,444.4 730.4,447.0 736.9,449.8 748.7,449.8 761.8,449.8 788.6,449.8 804.8,449.8 808.0,449.8 814.4,449.8 820.4,449.8 825.0,449.8 938.4,449.8 974.3,449.8 1012.6,450.0 1018.6,455.2 1025.4,455.2 1028.3,455.2 1033.9,455.2 1051.6,455.2 1087.8,455.2 1095.1,455.2 1190.7,455.2 1196.6,455.2 1207.7,442.1 1213.1,428.9 1224.7,415.8 1229.8,402.5 1235.7,389.3 1240.2,376.2 1253.0,389.3 1259.8,389.3 1266.6,376.2 1294.6,389.3 1298.9,402.5 1298.0,415.8 1307.4,428.9 1307.4,442.1 1347.3,449.3 1374.6,449.3 1380.0,449.3 1385.0,449.3 1393.0,449.3 1400.0,449.3 1406.0,449.3 1411.0,449.3 1417.0,449.3 1447.7,449.3 1456.2,449.3 1467.2,454.5 1475.2,455.0 1494.2,455.0 1544.1,452.0 1550.5,450.3 1561.2,450.5 1566.9,450.5 1570.0,450.5 1572.7,453.0 1588.1,453.0 1592.7,453.0 1612.6,453.0 1624.0,453.0 1636.0,453.0 1654.4,453.0 1668.6,450.3 1670.2,450.3 1683.8,450.3 1689.3,450.3 1703.5,450.3 1711.0,450.3 1722.9,450.3 1734.8,450.3 1738.2,450.3 1776.3,450.3 1780.4,453.0 1785.2,453.0 1798.1,453.0 1812.4,453.0 1817.8,453.0 1839.6,455.0" fill="none" stroke="#ee9a9a" stroke-width="2.2" stroke-linejoin="round"/><circle cx="424.2" cy="454.1" r="3.6" fill="#ee9a9a"/><circle cx="437.8" cy="455.3" r="3.6" fill="#ee9a9a"/><circle cx="452.9" cy="442.1" r="3.6" fill="#ee9a9a"/><circle cx="455.9" cy="428.9" r="3.6" fill="#ee9a9a"/><circle cx="463.5" cy="415.9" r="3.6" fill="#ee9a9a"/><circle cx="466.3" cy="402.7" r="3.6" fill="#ee9a9a"/><circle cx="469.6" cy="389.4" r="3.6" fill="#ee9a9a"/><circle cx="471.7" cy="376.1" r="3.6" fill="#ee9a9a"/><circle cx="478.6" cy="373.5" r="3.6" fill="#ee9a9a"/><circle cx="489.5" cy="386.7" r="3.6" fill="#ee9a9a"/><circle cx="489.5" cy="400.0" r="3.6" fill="#ee9a9a"/><circle cx="489.5" cy="413.3" r="3.6" fill="#ee9a9a"/><circle cx="489.5" cy="426.3" r="3.6" fill="#ee9a9a"/><circle cx="499.8" cy="426.3" r="3.6" fill="#ee9a9a"/><circle cx="506.4" cy="439.4" r="3.6" fill="#ee9a9a"/><circle cx="506.4" cy="452.9" r="3.6" fill="#ee9a9a"/><circle cx="527.8" cy="451.8" r="3.6" fill="#ee9a9a"/><circle cx="534.5" cy="449.6" r="3.6" fill="#ee9a9a"/><circle cx="596.4" cy="449.8" r="3.6" fill="#ee9a9a"/><circle cx="610.6" cy="449.8" r="3.6" fill="#ee9a9a"/><circle cx="617.0" cy="449.8" r="3.6" fill="#ee9a9a"/><circle cx="622.0" cy="449.8" r="3.6" fill="#ee9a9a"/><circle cx="653.3" cy="449.8" r="3.6" fill="#ee9a9a"/><circle cx="662.4" cy="449.8" r="3.6" fill="#ee9a9a"/><circle cx="680.3" cy="449.8" r="3.6" fill="#ee9a9a"/><circle cx="685.4" cy="449.8" r="3.6" fill="#ee9a9a"/><circle cx="690.7" cy="449.8" r="3.6" fill="#ee9a9a"/><circle cx="716.6" cy="444.4" r="3.6" fill="#ee9a9a"/><circle cx="730.4" cy="447.0" r="3.6" fill="#ee9a9a"/><circle cx="736.9" cy="449.8" r="3.6" fill="#ee9a9a"/><circle cx="748.7" cy="449.8" r="3.6" fill="#ee9a9a"/><circle cx="761.8" cy="449.8" r="3.6" fill="#ee9a9a"/><circle cx="788.6" cy="449.8" r="3.6" fill="#ee9a9a"/><circle cx="804.8" cy="449.8" r="3.6" fill="#ee9a9a"/><circle cx="808.0" cy="449.8" r="3.6" fill="#ee9a9a"/><circle cx="814.4" cy="449.8" r="3.6" fill="#ee9a9a"/><circle cx="820.4" cy="449.8" r="3.6" fill="#ee9a9a"/><circle cx="825.0" cy="449.8" r="3.6" fill="#ee9a9a"/><circle cx="938.4" cy="449.8" r="3.6" fill="#ee9a9a"/><circle cx="974.3" cy="449.8" r="3.6" fill="#ee9a9a"/><circle cx="1012.6" cy="450.0" r="3.6" fill="#ee9a9a"/><circle cx="1018.6" cy="455.2" r="3.6" fill="#ee9a9a"/><circle cx="1025.4" cy="455.2" r="3.6" fill="#ee9a9a"/><circle cx="1028.3" cy="455.2" r="3.6" fill="#ee9a9a"/><circle cx="1033.9" cy="455.2" r="3.6" fill="#ee9a9a"/><circle cx="1051.6" cy="455.2" r="3.6" fill="#ee9a9a"/><circle cx="1087.8" cy="455.2" r="3.6" fill="#ee9a9a"/><circle cx="1095.1" cy="455.2" r="3.6" fill="#ee9a9a"/><circle cx="1190.7" cy="455.2" r="3.6" fill="#ee9a9a"/><circle cx="1196.6" cy="455.2" r="3.6" fill="#ee9a9a"/><circle cx="1207.7" cy="442.1" r="3.6" fill="#ee9a9a"/><circle cx="1213.1" cy="428.9" r="3.6" fill="#ee9a9a"/><circle cx="1224.7" cy="415.8" r="3.6" fill="#ee9a9a"/><circle cx="1229.8" cy="402.5" r="3.6" fill="#ee9a9a"/><circle cx="1235.7" cy="389.3" r="3.6" fill="#ee9a9a"/><circle cx="1240.2" cy="376.2" r="3.6" fill="#ee9a9a"/><circle cx="1253.0" cy="389.3" r="3.6" fill="#ee9a9a"/><circle cx="1259.8" cy="389.3" r="3.6" fill="#ee9a9a"/><circle cx="1266.6" cy="376.2" r="3.6" fill="#ee9a9a"/><circle cx="1294.6" cy="389.3" r="3.6" fill="#ee9a9a"/><circle cx="1298.9" cy="402.5" r="3.6" fill="#ee9a9a"/><circle cx="1298.0" cy="415.8" r="3.6" fill="#ee9a9a"/><circle cx="1307.4" cy="428.9" r="3.6" fill="#ee9a9a"/><circle cx="1307.4" cy="442.1" r="3.6" fill="#ee9a9a"/><circle cx="1347.3" cy="449.3" r="3.6" fill="#ee9a9a"/><circle cx="1374.6" cy="449.3" r="3.6" fill="#ee9a9a"/><circle cx="1380.0" cy="449.3" r="3.6" fill="#ee9a9a"/><circle cx="1385.0" cy="449.3" r="3.6" fill="#ee9a9a"/><circle cx="1393.0" cy="449.3" r="3.6" fill="#ee9a9a"/><circle cx="1400.0" cy="449.3" r="3.6" fill="#ee9a9a"/><circle cx="1406.0" cy="449.3" r="3.6" fill="#ee9a9a"/><circle cx="1411.0" cy="449.3" r="3.6" fill="#ee9a9a"/><circle cx="1417.0" cy="449.3" r="3.6" fill="#ee9a9a"/><circle cx="1447.7" cy="449.3" r="3.6" fill="#ee9a9a"/><circle cx="1456.2" cy="449.3" r="3.6" fill="#ee9a9a"/><circle cx="1467.2" cy="454.5" r="3.6" fill="#ee9a9a"/><circle cx="1475.2" cy="455.0" r="3.6" fill="#ee9a9a"/><circle cx="1494.2" cy="455.0" r="3.6" fill="#ee9a9a"/><circle cx="1544.1" cy="452.0" r="3.6" fill="#ee9a9a"/><circle cx="1550.5" cy="450.3" r="3.6" fill="#ee9a9a"/><circle cx="1561.2" cy="450.5" r="3.6" fill="#ee9a9a"/><circle cx="1566.9" cy="450.5" r="3.6" fill="#ee9a9a"/><circle cx="1570.0" cy="450.5" r="3.6" fill="#ee9a9a"/><circle cx="1572.7" cy="453.0" r="3.6" fill="#ee9a9a"/><circle cx="1588.1" cy="453.0" r="3.6" fill="#ee9a9a"/><circle cx="1592.7" cy="453.0" r="3.6" fill="#ee9a9a"/><circle cx="1612.6" cy="453.0" r="3.6" fill="#ee9a9a"/><circle cx="1624.0" cy="453.0" r="3.6" fill="#ee9a9a"/><circle cx="1636.0" cy="453.0" r="3.6" fill="#ee9a9a"/><circle cx="1654.4" cy="453.0" r="3.6" fill="#ee9a9a"/><circle cx="1668.6" cy="450.3" r="3.6" fill="#ee9a9a"/><circle cx="1670.2" cy="450.3" r="3.6" fill="#ee9a9a"/><circle cx="1683.8" cy="450.3" r="3.6" fill="#ee9a9a"/><circle cx="1689.3" cy="450.3" r="3.6" fill="#ee9a9a"/><circle cx="1703.5" cy="450.3" r="3.6" fill="#ee9a9a"/><circle cx="1711.0" cy="450.3" r="3.6" fill="#ee9a9a"/><circle cx="1722.9" cy="450.3" r="3.6" fill="#ee9a9a"/><circle cx="1734.8" cy="450.3" r="3.6" fill="#ee9a9a"/><circle cx="1738.2" cy="450.3" r="3.6" fill="#ee9a9a"/><circle cx="1776.3" cy="450.3" r="3.6" fill="#ee9a9a"/><circle cx="1780.4" cy="453.0" r="3.6" fill="#ee9a9a"/><circle cx="1785.2" cy="453.0" r="3.6" fill="#ee9a9a"/><circle cx="1798.1" cy="453.0" r="3.6" fill="#ee9a9a"/><circle cx="1812.4" cy="453.0" r="3.6" fill="#ee9a9a"/><circle cx="1817.8" cy="453.0" r="3.6" fill="#ee9a9a"/><circle cx="1839.6" cy="455.0" r="3.6" fill="#ee9a9a"/><polyline points="424.2,458.1 437.8,461.0 454.4,461.0 464.8,461.0 466.3,457.6 478.6,458.0 489.5,458.0 499.8,457.0 506.4,455.3 528.0,455.3 534.7,455.3 596.4,468.7 610.6,481.8 618.0,494.8 622.0,508.5 653.3,511.2 662.4,508.0 680.3,494.8 680.3,481.8 685.4,469.0 690.7,455.0 715.5,455.0 730.4,455.0 736.9,455.0 748.7,468.8 761.8,481.8 788.6,468.8 804.8,481.8 808.0,495.0 814.4,508.1 820.4,521.2 825.0,534.7 938.4,534.7 974.3,534.7 1012.6,521.2 1012.6,508.0 1018.6,495.2 1025.4,495.2 1028.3,508.0 1030.8,521.2 1033.9,534.3 1051.6,521.2 1051.6,508.0 1051.6,495.2 1087.8,481.6 1087.8,468.8 1095.1,455.2 1190.7,456.0 1196.6,460.5 1208.0,460.5 1212.0,460.5 1226.0,460.5 1230.0,460.5 1236.8,461.0 1253.0,461.0 1259.8,458.0 1266.6,455.5 1294.6,455.2 1298.9,455.2 1307.4,455.2 1344.0,455.2 1347.3,455.2 1375.4,468.8 1381.4,481.6 1386.5,495.2 1394.1,508.0 1396.7,521.2 1401.8,523.3 1408.6,528.4 1417.1,534.3 1447.7,521.2 1448.5,508.0 1456.2,521.2 1459.6,534.3 1467.2,534.3 1474.9,521.2 1475.2,517.0 1475.2,513.0 1494.2,500.4 1494.2,486.8 1544.1,486.8 1550.5,486.8 1561.2,500.4 1566.9,513.3 1570.0,526.5 1572.7,526.5 1572.3,539.5 1588.1,526.5 1588.1,513.3 1588.1,500.4 1592.7,486.8 1612.6,489.8 1624.0,492.5 1636.0,487.5 1654.4,484.6 1654.4,469.1 1668.6,469.1 1670.2,468.7 1683.8,481.6 1689.3,495.0 1703.5,497.3 1711.0,495.0 1722.9,508.2 1734.8,521.1 1738.2,534.7 1776.3,521.1 1776.3,508.2 1776.3,495.0 1780.4,495.0 1785.2,508.2 1798.1,495.0 1812.4,481.6 1812.4,468.7 1817.8,455.1 1839.6,455.1" fill="none" stroke="#93c0f1" stroke-width="2.2" stroke-linejoin="round"/><circle cx="424.2" cy="458.1" r="3.6" fill="#93c0f1"/><circle cx="437.8" cy="461.0" r="3.6" fill="#93c0f1"/><circle cx="454.4" cy="461.0" r="3.6" fill="#93c0f1"/><circle cx="464.8" cy="461.0" r="3.6" fill="#93c0f1"/><circle cx="466.3" cy="457.6" r="3.6" fill="#93c0f1"/><circle cx="478.6" cy="458.0" r="3.6" fill="#93c0f1"/><circle cx="489.5" cy="458.0" r="3.6" fill="#93c0f1"/><circle cx="499.8" cy="457.0" r="3.6" fill="#93c0f1"/><circle cx="506.4" cy="455.3" r="3.6" fill="#93c0f1"/><circle cx="528.0" cy="455.3" r="3.6" fill="#93c0f1"/><circle cx="534.7" cy="455.3" r="3.6" fill="#93c0f1"/><circle cx="596.4" cy="468.7" r="3.6" fill="#93c0f1"/><circle cx="610.6" cy="481.8" r="3.6" fill="#93c0f1"/><circle cx="618.0" cy="494.8" r="3.6" fill="#93c0f1"/><circle cx="622.0" cy="508.5" r="3.6" fill="#93c0f1"/><circle cx="653.3" cy="511.2" r="3.6" fill="#93c0f1"/><circle cx="662.4" cy="508.0" r="3.6" fill="#93c0f1"/><circle cx="680.3" cy="494.8" r="3.6" fill="#93c0f1"/><circle cx="680.3" cy="481.8" r="3.6" fill="#93c0f1"/><circle cx="685.4" cy="469.0" r="3.6" fill="#93c0f1"/><circle cx="690.7" cy="455.0" r="3.6" fill="#93c0f1"/><circle cx="715.5" cy="455.0" r="3.6" fill="#93c0f1"/><circle cx="730.4" cy="455.0" r="3.6" fill="#93c0f1"/><circle cx="736.9" cy="455.0" r="3.6" fill="#93c0f1"/><circle cx="748.7" cy="468.8" r="3.6" fill="#93c0f1"/><circle cx="761.8" cy="481.8" r="3.6" fill="#93c0f1"/><circle cx="788.6" cy="468.8" r="3.6" fill="#93c0f1"/><circle cx="804.8" cy="481.8" r="3.6" fill="#93c0f1"/><circle cx="808.0" cy="495.0" r="3.6" fill="#93c0f1"/><circle cx="814.4" cy="508.1" r="3.6" fill="#93c0f1"/><circle cx="820.4" cy="521.2" r="3.6" fill="#93c0f1"/><circle cx="825.0" cy="534.7" r="3.6" fill="#93c0f1"/><circle cx="938.4" cy="534.7" r="3.6" fill="#93c0f1"/><circle cx="974.3" cy="534.7" r="3.6" fill="#93c0f1"/><circle cx="1012.6" cy="521.2" r="3.6" fill="#93c0f1"/><circle cx="1012.6" cy="508.0" r="3.6" fill="#93c0f1"/><circle cx="1018.6" cy="495.2" r="3.6" fill="#93c0f1"/><circle cx="1025.4" cy="495.2" r="3.6" fill="#93c0f1"/><circle cx="1028.3" cy="508.0" r="3.6" fill="#93c0f1"/><circle cx="1030.8" cy="521.2" r="3.6" fill="#93c0f1"/><circle cx="1033.9" cy="534.3" r="3.6" fill="#93c0f1"/><circle cx="1051.6" cy="521.2" r="3.6" fill="#93c0f1"/><circle cx="1051.6" cy="508.0" r="3.6" fill="#93c0f1"/><circle cx="1051.6" cy="495.2" r="3.6" fill="#93c0f1"/><circle cx="1087.8" cy="481.6" r="3.6" fill="#93c0f1"/><circle cx="1087.8" cy="468.8" r="3.6" fill="#93c0f1"/><circle cx="1095.1" cy="455.2" r="3.6" fill="#93c0f1"/><circle cx="1190.7" cy="456.0" r="3.6" fill="#93c0f1"/><circle cx="1196.6" cy="460.5" r="3.6" fill="#93c0f1"/><circle cx="1208.0" cy="460.5" r="3.6" fill="#93c0f1"/><circle cx="1212.0" cy="460.5" r="3.6" fill="#93c0f1"/><circle cx="1226.0" cy="460.5" r="3.6" fill="#93c0f1"/><circle cx="1230.0" cy="460.5" r="3.6" fill="#93c0f1"/><circle cx="1236.8" cy="461.0" r="3.6" fill="#93c0f1"/><circle cx="1253.0" cy="461.0" r="3.6" fill="#93c0f1"/><circle cx="1259.8" cy="458.0" r="3.6" fill="#93c0f1"/><circle cx="1266.6" cy="455.5" r="3.6" fill="#93c0f1"/><circle cx="1294.6" cy="455.2" r="3.6" fill="#93c0f1"/><circle cx="1298.9" cy="455.2" r="3.6" fill="#93c0f1"/><circle cx="1307.4" cy="455.2" r="3.6" fill="#93c0f1"/><circle cx="1344.0" cy="455.2" r="3.6" fill="#93c0f1"/><circle cx="1347.3" cy="455.2" r="3.6" fill="#93c0f1"/><circle cx="1375.4" cy="468.8" r="3.6" fill="#93c0f1"/><circle cx="1381.4" cy="481.6" r="3.6" fill="#93c0f1"/><circle cx="1386.5" cy="495.2" r="3.6" fill="#93c0f1"/><circle cx="1394.1" cy="508.0" r="3.6" fill="#93c0f1"/><circle cx="1396.7" cy="521.2" r="3.6" fill="#93c0f1"/><circle cx="1401.8" cy="523.3" r="3.6" fill="#93c0f1"/><circle cx="1408.6" cy="528.4" r="3.6" fill="#93c0f1"/><circle cx="1417.1" cy="534.3" r="3.6" fill="#93c0f1"/><circle cx="1447.7" cy="521.2" r="3.6" fill="#93c0f1"/><circle cx="1448.5" cy="508.0" r="3.6" fill="#93c0f1"/><circle cx="1456.2" cy="521.2" r="3.6" fill="#93c0f1"/><circle cx="1459.6" cy="534.3" r="3.6" fill="#93c0f1"/><circle cx="1467.2" cy="534.3" r="3.6" fill="#93c0f1"/><circle cx="1474.9" cy="521.2" r="3.6" fill="#93c0f1"/><circle cx="1475.2" cy="517.0" r="3.6" fill="#93c0f1"/><circle cx="1475.2" cy="513.0" r="3.6" fill="#93c0f1"/><circle cx="1494.2" cy="500.4" r="3.6" fill="#93c0f1"/><circle cx="1494.2" cy="486.8" r="3.6" fill="#93c0f1"/><circle cx="1544.1" cy="486.8" r="3.6" fill="#93c0f1"/><circle cx="1550.5" cy="486.8" r="3.6" fill="#93c0f1"/><circle cx="1561.2" cy="500.4" r="3.6" fill="#93c0f1"/><circle cx="1566.9" cy="513.3" r="3.6" fill="#93c0f1"/><circle cx="1570.0" cy="526.5" r="3.6" fill="#93c0f1"/><circle cx="1572.7" cy="526.5" r="3.6" fill="#93c0f1"/><circle cx="1572.3" cy="539.5" r="3.6" fill="#93c0f1"/><circle cx="1588.1" cy="526.5" r="3.6" fill="#93c0f1"/><circle cx="1588.1" cy="513.3" r="3.6" fill="#93c0f1"/><circle cx="1588.1" cy="500.4" r="3.6" fill="#93c0f1"/><circle cx="1592.7" cy="486.8" r="3.6" fill="#93c0f1"/><circle cx="1612.6" cy="489.8" r="3.6" fill="#93c0f1"/><circle cx="1624.0" cy="492.5" r="3.6" fill="#93c0f1"/><circle cx="1636.0" cy="487.5" r="3.6" fill="#93c0f1"/><circle cx="1654.4" cy="484.6" r="3.6" fill="#93c0f1"/><circle cx="1654.4" cy="469.1" r="3.6" fill="#93c0f1"/><circle cx="1668.6" cy="469.1" r="3.6" fill="#93c0f1"/><circle cx="1670.2" cy="468.7" r="3.6" fill="#93c0f1"/><circle cx="1683.8" cy="481.6" r="3.6" fill="#93c0f1"/><circle cx="1689.3" cy="495.0" r="3.6" fill="#93c0f1"/><circle cx="1703.5" cy="497.3" r="3.6" fill="#93c0f1"/><circle cx="1711.0" cy="495.0" r="3.6" fill="#93c0f1"/><circle cx="1722.9" cy="508.2" r="3.6" fill="#93c0f1"/><circle cx="1734.8" cy="521.1" r="3.6" fill="#93c0f1"/><circle cx="1738.2" cy="534.7" r="3.6" fill="#93c0f1"/><circle cx="1776.3" cy="521.1" r="3.6" fill="#93c0f1"/><circle cx="1776.3" cy="508.2" r="3.6" fill="#93c0f1"/><circle cx="1776.3" cy="495.0" r="3.6" fill="#93c0f1"/><circle cx="1780.4" cy="495.0" r="3.6" fill="#93c0f1"/><circle cx="1785.2" cy="508.2" r="3.6" fill="#93c0f1"/><circle cx="1798.1" cy="495.0" r="3.6" fill="#93c0f1"/><circle cx="1812.4" cy="481.6" r="3.6" fill="#93c0f1"/><circle cx="1812.4" cy="468.7" r="3.6" fill="#93c0f1"/><circle cx="1817.8" cy="455.1" r="3.6" fill="#93c0f1"/><circle cx="1839.6" cy="455.1" r="3.6" fill="#93c0f1"/><rect x="1265" y="324" width="2.5" height="262" fill="#3a3a3a"/><rect x="1187" y="562" width="158" height="25" rx="6" fill="#9d9d9d" fill-opacity="0.92"/><rect x="1194" y="568" width="6" height="6" fill="#adadad"/><rect x="1194" y="574" width="6" height="6" fill="#c4c4c4"/><rect x="1200" y="568" width="6" height="6" fill="#d0d0d0"/><rect x="1200" y="574" width="6" height="6" fill="#b8b8b8"/><rect x="1206" y="568" width="6" height="6" fill="#b8b8b8"/><rect x="1206" y="574" width="6" height="6" fill="#bdbdbd"/><rect x="1212" y="568" width="6" height="6" fill="#b8b8b8"/><rect x="1212" y="574" width="6" height="6" fill="#adadad"/><rect x="1218" y="568" width="6" height="6" fill="#bdbdbd"/><rect x="1218" y="574" width="6" height="6" fill="#b8b8b8"/><rect x="1224" y="568" width="6" height="6" fill="#bdbdbd"/><rect x="1224" y="574" width="6" height="6" fill="#c4c4c4"/><rect x="1230" y="568" width="6" height="6" fill="#b8b8b8"/><rect x="1230" y="574" width="6" height="6" fill="#b8b8b8"/><rect x="1236" y="568" width="6" height="6" fill="#d0d0d0"/><rect x="1236" y="574" width="6" height="6" fill="#d0d0d0"/><rect x="1242" y="568" width="6" height="6" fill="#b8b8b8"/><rect x="1242" y="574" width="6" height="6" fill="#c4c4c4"/><rect x="1248" y="568" width="6" height="6" fill="#b8b8b8"/><rect x="1248" y="574" width="6" height="6" fill="#bdbdbd"/><rect x="1265" y="562" width="2.5" height="25" fill="#3a3a3a"/><text x="1258" y="579" font-family="Liberation Sans" font-size="13.5" font-weight="bold" fill="#fff">01:06:16.694</text></svg>
<div class="gbtn" style="left:361px;top:17px;width:163px;height:34px;line-height:32px;padding-left:13px"><svg style="position:absolute;left:14px;top:8px" width="11" height="15" viewBox="0 0 11 15"><path d="M8.5 1.5 L2.5 7.5 L8.5 13.5" fill="none" stroke="#fff" stroke-width="2.8"/></svg><span style="position:absolute;left:29px;top:1px;font-size:15.7px">Go to Dashboard</span></div>
<div class="fbtn" style="left:361px;top:61px;width:119px;height:34px;padding-left:14px">Trader426 <span class="caret" style="margin-left:4px"></span></div>
<div class="fbtn" style="left:487px;top:61px;width:134px;height:34px;padding-left:14px">All Accounts <span class="caret" style="margin-left:4px"></span></div>
<div class="fbtn" style="left:627px;top:61px;width:152px;height:34px;padding-left:14px">All Instruments <span class="caret" style="margin-left:4px"></span></div>
<div class="abs" style="left:785px;top:65px;width:57px;height:25px;border-radius:3px;background:#e2e2e2;border:1px solid #d4d4d4;color:#fff;font-size:13px;font-weight:bold;line-height:23px;padding-left:6px;white-space:nowrap">&#x2716;Clear</div>
<div class="abs" style="left:2097px;top:15px;width:135px;height:34px;border-radius:5px;background:linear-gradient(#0e9cdb,#0a7dbd);border:1px solid #6f7a80;color:#fff;font-size:15.7px;line-height:33px;text-align:center;text-shadow:0.5px 0.8px 0 #222;white-space:nowrap">Review Cluster</div>
<div class="gbtn" style="left:1891px;top:61px;width:196px;height:34px;line-height:34px;font-size:15.8px">View Individual Clusters</div>
<div class="gbtn" style="left:2100px;top:61px;width:132px;height:34px;"></div>
<div class="abs" style="left:2144px;top:62px;width:1px;height:32px;background:#7a7a7a"></div>
<div class="abs" style="left:2187px;top:62px;width:1px;height:32px;background:#7a7a7a"></div>
<svg class="abs" style="left:2114px;top:69.5px" width="17" height="16" viewBox="0 0 17 16"><rect x="0" y="1" width="17" height="15" fill="#111"/><rect x="0" y="0" width="17" height="15" fill="#fff"/><rect x="7.6" y="0" width="1" height="15" fill="#b8b8c8"/><rect x="0" y="7.2" width="17" height="1" fill="#b8b8b8"/></svg>
<svg class="abs" style="left:2158px;top:70.5px" width="18" height="15" viewBox="0 0 18 15"><g transform="translate(0.4,1)" fill="#111" stroke="#111"><path d="M0 0 H2.8 V10.4 H16.8 V12.6 H0 Z" stroke="none"/><path d="M3.6 8 L6.8 4.8 L9.3 8.2 L13.4 4" fill="none" stroke-width="1.8"/></g><g fill="#fff" stroke="#fff"><path d="M0 0 H2.8 V10.4 H16.8 V12.6 H0 Z" stroke="none"/><path d="M3.6 8 L6.8 4.8 L9.3 8.2 L13.4 4" fill="none" stroke-width="1.8"/><path d="M11.4 1.3 H16.4 V6.3 Z" stroke="none"/></g></svg>
<svg class="abs" style="left:2201.5px;top:69px" width="17" height="18" viewBox="0 0 17 18"><path d="M8.4 0 L16.8 4.4 L16.8 12.6 L8.4 17 L0 12.6 L0 4.4 Z" fill="#fff"/><path d="M0.3 5.4 L8.4 9.5 L16.5 5.4 M0.3 9.4 L8.4 13.5 L16.5 9.4" fill="none" stroke="#4a3a30" stroke-width="1.1"/></svg>
<div class="abs" style="left:360px;top:103px;width:1498px;height:181px;background:#d9d9d9;border-top:2px solid #b5b5b5;border-left:2px solid #b5b5b5;border-bottom:2px solid #c3c3c3"></div>
<div class="abs" style="left:374px;top:116px;width:67px;height:51px;background:#d33535;color:#222;font-size:23px;line-height:51px;text-align:center">100</div>
<div class="st" style="left:453px;top:122px;font-weight:bold;font-size:17.9px">MODEL: SPOOFING</div>
<div class="st" style="left:453px;top:147px;font-weight:bold;font-size:17.9px">( Trader426 )</div>
<div class="st" style="left:453px;top:175px">Instrument: f Instrument1096</div>
<div class="st" style="left:819px;top:119px">Placed Buy Volume: 168</div>
<div class="st" style="left:1064px;top:119px">Placed Sell Volume: 75</div>
<div class="st" style="left:1309px;top:119px">Filled Buy Volume: 6</div>
<div class="st" style="left:1554px;top:119px">Filled Sell Volume: 6</div>
<div class="st" style="left:819px;top:164px">Ord Cancel/Placed: 68.8%</div>
<div class="st" style="left:1064px;top:164px">Ord Modify/Placed: 2.5%</div>
<div class="st" style="left:1309px;top:164px">Volume Cancel/Placed: 95.1%</div>
<div class="st" style="left:1554px;top:164px">Volume Modify/Placed: 4.1%</div>
<div class="abs" style="left:374px;top:206px;width:1471px;height:1px;background:#bcbcbc"></div>
<div class="st" style="left:374px;top:221px">Duration: 00:01:38 740.383296</div>
<div class="st" style="left:668px;top:221px">Placed Orders: 67</div>
<div class="st" style="left:963px;top:221px">Canceled Orders: 55</div>
<div class="st" style="left:1257px;top:221px">Partial Fills: 0</div>
<div class="st" style="left:1552px;top:221px">Exchange: Exchange17</div>
<div class="st" style="left:374px;top:244px">Total Messages: 151</div>
<div class="st" style="left:668px;top:244px">Modified Orders: 4</div>
<div class="st" style="left:963px;top:244px">Rejected Orders: 13</div>
<div class="st" style="left:1257px;top:244px">Complete Fills: 12</div>
<div class="abs" style="left:1553px;top:244px;width:68px;height:24px;border-radius:3px;background:linear-gradient(#8f8f8f,#737373);border:1px solid #5e5e5e;color:#fff;font-size:13.5px;line-height:22px;padding-left:22px;white-space:nowrap">Export<svg style="position:absolute;left:8px;top:4px" width="10" height="13" viewBox="0 0 10 13"><path d="M0 0 H6.5 L10 3.5 V13 H0 Z" fill="#fff"/><path d="M5 4 V10 M2.5 7.5 L5 10 L7.5 7.5" stroke="#777" stroke-width="1.4" fill="none"/></svg></div>
<div class="abs" style="left:1778px;top:244px;width:67px;height:24px;border-radius:3px;background:#dedede;border:1px solid #d0d0d0;color:#f2f2f2;font-size:13.5px;line-height:22px;padding-left:23px;white-space:nowrap">Reset<svg style="position:absolute;left:7px;top:5px" width="13" height="13" viewBox="0 0 13 13"><circle cx="5" cy="5" r="3.8" fill="none" stroke="#f2f2f2" stroke-width="2"/><path d="M8 8 L12 12" stroke="#f2f2f2" stroke-width="2.6"/></svg></div>
<div class="abs" style="left:1857px;top:103px;width:376px;height:181px;background:#d9d9d9;border-top:2px solid #b5b5b5;border-left:1px solid #b5b5b5;border-right:2px solid #bdbdbd"></div>
<div class="abs" style="left:1870px;top:116px;font-weight:bold;font-size:18px;color:#1a1a1a;white-space:nowrap;line-height:20px">MARKET REPLAY <span style="font-weight:normal;font-size:14px;color:#222">994 / 1542</span></div>
<svg class="abs" style="left:2208px;top:117px" width="13" height="12" viewBox="0 0 13 12"><path d="M1.5 1.5 L11.5 10.5 M11.5 1.5 L1.5 10.5" stroke="#111" stroke-width="2.8"/></svg>
<div class="abs" style="left:1871px;top:145px;width:337px;height:9px;background:linear-gradient(#999,#b4b4b4);border-radius:1px"></div>
<div class="abs" style="left:2085px;top:139px;width:21px;height:21px;border-radius:50%;background:radial-gradient(circle at 50% 35%,#0f86e6,#0a6fc4)"></div>
<div class="abs" style="left:1936px;top:168px;width:218px;height:34px;border-radius:4px;background:linear-gradient(#b3b3b3,#999);border:1px solid #7c7c7c"></div>
<div class="abs" style="left:1980px;top:169px;width:1px;height:32px;background:#7c7c7c"></div>
<div class="abs" style="left:2023px;top:169px;width:1px;height:32px;background:#7c7c7c"></div>
<div class="abs" style="left:2065px;top:169px;width:1px;height:32px;background:#7c7c7c"></div>
<div class="abs" style="left:2109px;top:169px;width:1px;height:32px;background:#7c7c7c"></div>
<svg class="abs" style="left:1950px;top:178.5px" width="19" height="14" viewBox="0 0 19 14"><path d="M0 0 H2.6 V12 H0 Z" fill="#3a3a3a" transform="translate(0.6,1)"/><path d="M2.4 6 L10 0 V12 Z" fill="#3a3a3a" transform="translate(0.6,1)"/><path d="M9.4 6 L17 0 V12 Z" fill="#3a3a3a" transform="translate(0.6,1)"/><path d="M0 0 H2.6 V12 H0 Z" fill="#fff"/><path d="M2.4 6 L10 0 V12 Z" fill="#fff"/><path d="M9.4 6 L17 0 V12 Z" fill="#fff"/></svg>
<svg class="abs" style="left:1994px;top:178.5px" width="19" height="14" viewBox="0 0 19 14"><path d="M0 6 L8.6 0 V12 Z" fill="#3a3a3a" transform="translate(0.6,1)"/><path d="M8.4 6 L17 0 V12 Z" fill="#3a3a3a" transform="translate(0.6,1)"/><path d="M0 6 L8.6 0 V12 Z" fill="#fff"/><path d="M8.4 6 L17 0 V12 Z" fill="#fff"/></svg>
<svg class="abs" style="left:2038px;top:176px" width="17" height="18" viewBox="0 0 17 18"><path d="M0 0 L14.7 8 L0 16 Z" fill="#3a3a3a" transform="translate(0.6,1)"/><path d="M0 0 L14.7 8 L0 16 Z" fill="#fff"/></svg>
<svg class="abs" style="left:2079.5px;top:178.5px" width="19" height="14" viewBox="0 0 19 14"><path d="M0 0 L8.6 6 L0 12 Z" fill="#3a3a3a" transform="translate(0.6,1)"/><path d="M8.4 0 L17 6 L8.4 12 Z" fill="#3a3a3a" transform="translate(0.6,1)"/><path d="M0 0 L8.6 6 L0 12 Z" fill="#fff"/><path d="M8.4 0 L17 6 L8.4 12 Z" fill="#fff"/></svg>
<svg class="abs" style="left:2123.5px;top:178.5px" width="19" height="14" viewBox="0 0 19 14"><path d="M0 0 L7.6 6 L0 12 Z" fill="#3a3a3a" transform="translate(0.6,1)"/><path d="M7 0 L14.6 6 L7 12 Z" fill="#3a3a3a" transform="translate(0.6,1)"/><path d="M14.4 0 H17 V12 H14.4 Z" fill="#3a3a3a" transform="translate(0.6,1)"/><path d="M0 0 L7.6 6 L0 12 Z" fill="#fff"/><path d="M7 0 L14.6 6 L7 12 Z" fill="#fff"/><path d="M14.4 0 H17 V12 H14.4 Z" fill="#fff"/></svg>
<div class="abs" style="left:1931px;top:208px;font-size:13.5px;color:#222;white-space:nowrap;line-height:15px">Time:</div>
<svg class="abs" style="left:1968px;top:210px" width="60" height="12"><rect x="0" y="0" width="5" height="5" fill="#d0d0d0"/><rect x="0" y="5" width="5" height="5" fill="#a8a8a8"/><rect x="0" y="10" width="5" height="5" fill="#d0d0d0"/><rect x="5" y="0" width="5" height="5" fill="#d0d0d0"/><rect x="5" y="5" width="5" height="5" fill="#a8a8a8"/><rect x="5" y="10" width="5" height="5" fill="#a8a8a8"/><rect x="10" y="0" width="5" height="5" fill="#bdbdbd"/><rect x="10" y="5" width="5" height="5" fill="#bdbdbd"/><rect x="10" y="10" width="5" height="5" fill="#a8a8a8"/><rect x="15" y="0" width="5" height="5" fill="#d0d0d0"/><rect x="15" y="5" width="5" height="5" fill="#c0c0c8"/><rect x="15" y="10" width="5" height="5" fill="#a8a8a8"/><rect x="20" y="0" width="5" height="5" fill="#bdbdbd"/><rect x="20" y="5" width="5" height="5" fill="#c8c8c8"/><rect x="20" y="10" width="5" height="5" fill="#d0d0d0"/><rect x="25" y="0" width="5" height="5" fill="#b0b0b0"/><rect x="25" y="5" width="5" height="5" fill="#bdbdbd"/><rect x="25" y="10" width="5" height="5" fill="#c8c8c8"/><rect x="30" y="0" width="5" height="5" fill="#a8a8a8"/><rect x="30" y="5" width="5" height="5" fill="#c0c0c8"/><rect x="30" y="10" width="5" height="5" fill="#c0c0c8"/><rect x="35" y="0" width="5" height="5" fill="#c8c8c8"/><rect x="35" y="5" width="5" height="5" fill="#a8a8a8"/><rect x="35" y="10" width="5" height="5" fill="#d0d0d0"/><rect x="40" y="0" width="5" height="5" fill="#d0d0d0"/><rect x="40" y="5" width="5" height="5" fill="#c0c0c8"/><rect x="40" y="10" width="5" height="5" fill="#c0c0c8"/><rect x="45" y="0" width="5" height="5" fill="#a8a8a8"/><rect x="45" y="5" width="5" height="5" fill="#c0c0c8"/><rect x="45" y="10" width="5" height="5" fill="#bdbdbd"/><rect x="50" y="0" width="5" height="5" fill="#a8a8a8"/><rect x="50" y="5" width="5" height="5" fill="#c8c8c8"/><rect x="50" y="10" width="5" height="5" fill="#a8a8a8"/><rect x="55" y="0" width="5" height="5" fill="#c8c8c8"/><rect x="55" y="5" width="5" height="5" fill="#c8c8c8"/><rect x="55" y="10" width="5" height="5" fill="#c8c8c8"/></svg>
<div class="abs" style="left:2031px;top:208px;font-size:13.5px;color:#222;white-space:nowrap;line-height:15px">01:06:16.694.000000</div>
<div class="abs" style="left:1859px;top:260px;width:60px;height:23px;border-radius:0 7px 0 0;background:linear-gradient(#a2a2a2,#8c8c8c);color:#5a5a5a;font-size:16px;line-height:24px;padding-left:5px">Ladder</div>
<div class="abs" style="left:1919px;top:260px;width:55px;height:23px;border-radius:0 7px 0 0;background:#e9e9e9;color:#333;font-size:16px;line-height:24px;padding-left:6px">Macro</div>
<div class="abs" style="left:1858px;top:283px;width:375px;height:1.5px;background:#c2c2c2"></div>
<div class="abs" style="left:1858px;top:284px;width:375px;height:880px;background:#eee;overflow:hidden"><div class="abs" style="left:0;top:27px;width:1px;height:860px;background:#bdbdbd;z-index:5"></div>
<div class="abs" style="left:0;top:0;width:349px;height:27px;background:#bbb"></div>
<div class="abs" style="left:4px;top:6px;width:80px;text-align:center;font-weight:bold;font-size:16px;color:#222;line-height:18px">Work</div>
<div class="abs" style="left:90px;top:6px;width:80px;text-align:center;font-weight:bold;font-size:16px;color:#222;line-height:18px">Bids</div>
<div class="abs" style="left:177px;top:6px;width:80px;text-align:center;font-weight:bold;font-size:16px;color:#222;line-height:18px">Price</div>
<div class="abs" style="left:264px;top:6px;width:80px;text-align:center;font-weight:bold;font-size:16px;color:#222;line-height:18px">Asks</div>
<div class="abs" style="left:87px;top:27px;width:87px;height:860px;background:#4a8fe0"></div>
<div class="abs" style="left:261px;top:27px;width:88px;height:860px;background:#d13434"></div>
<div class="abs" style="left:0;top:61.0px;width:349px;height:1px;background:rgba(0,0,0,0.18)"></div>
<div class="abs" style="left:174px;top:62px;width:87px;height:36px;line-height:36px;text-align:center;font-size:15.5px;color:#222">375.9</div>
<div class="abs" style="left:261px;top:62px;width:88px;height:36px;line-height:36px;text-align:right;padding-right:6px;font-size:15.5px;color:#fff">10</div>
<div class="abs" style="left:0;top:97.0px;width:349px;height:1px;background:rgba(0,0,0,0.18)"></div>
<div class="abs" style="left:174px;top:98px;width:87px;height:36px;line-height:36px;text-align:center;font-size:15.5px;color:#222">375.85</div>
<div class="abs" style="left:261px;top:98px;width:88px;height:36px;line-height:36px;text-align:right;padding-right:6px;font-size:15.5px;color:#fff">12</div>
<div class="abs" style="left:0;top:133.0px;width:349px;height:1px;background:rgba(0,0,0,0.18)"></div>
<div class="abs" style="left:174px;top:134px;width:87px;height:36px;line-height:36px;text-align:center;font-size:15.5px;color:#222">375.8</div>
<div class="abs" style="left:261px;top:134px;width:88px;height:36px;line-height:36px;text-align:right;padding-right:6px;font-size:15.5px;color:#fff">14</div>
<div class="abs" style="left:0;top:169.0px;width:349px;height:1px;background:rgba(0,0,0,0.18)"></div>
<div class="abs" style="left:174px;top:170px;width:87px;height:36px;line-height:36px;text-align:center;font-size:15.5px;color:#222">375.75</div>
<div class="abs" style="left:261px;top:170px;width:88px;height:36px;line-height:36px;text-align:right;padding-right:6px;font-size:15.5px;color:#fff">14</div>
<div class="abs" style="left:0;top:205.0px;width:349px;height:1px;background:rgba(0,0,0,0.18)"></div>
<div class="abs" style="left:174px;top:206px;width:87px;height:36px;line-height:36px;text-align:center;font-size:15.5px;color:#222">375.7</div>
<div class="abs" style="left:261px;top:206px;width:88px;height:36px;line-height:36px;text-align:right;padding-right:6px;font-size:15.5px;color:#fff">11</div>
<div class="abs" style="left:0;top:241.0px;width:349px;height:1px;background:rgba(0,0,0,0.18)"></div>
<div class="abs" style="left:0;top:242px;width:87px;height:36px;background:#ffb8b8"></div>
<div class="abs" style="left:0;top:242px;width:87px;height:36px;line-height:36px;text-align:center;font-size:15.5px;color:#222">5</div>
<div class="abs" style="left:174px;top:242px;width:87px;height:36px;line-height:36px;text-align:center;font-size:15.5px;color:#222">375.65</div>
<div class="abs" style="left:261px;top:242px;width:88px;height:36px;line-height:36px;text-align:right;padding-right:6px;font-size:15.5px;color:#fff">16</div>
<div class="abs" style="left:0;top:277.0px;width:349px;height:1px;background:rgba(0,0,0,0.18)"></div>
<div class="abs" style="left:0;top:278px;width:87px;height:36px;background:#ffb8b8"></div>
<div class="abs" style="left:0;top:278px;width:87px;height:36px;line-height:36px;text-align:center;font-size:15.5px;color:#222">10</div>
<div class="abs" style="left:174px;top:278px;width:87px;height:36px;line-height:36px;text-align:center;font-size:15.5px;color:#222">375.6</div>
<div class="abs" style="left:261px;top:278px;width:88px;height:36px;line-height:36px;text-align:right;padding-right:6px;font-size:15.5px;color:#fff">19</div>
<div class="abs" style="left:0;top:313.0px;width:349px;height:1px;background:rgba(0,0,0,0.18)"></div>
<div class="abs" style="left:0;top:314px;width:87px;height:36px;background:#ffb8b8"></div>
<div class="abs" style="left:0;top:314px;width:87px;height:36px;line-height:36px;text-align:center;font-size:15.5px;color:#222">10</div>
<div class="abs" style="left:174px;top:314px;width:87px;height:36px;line-height:36px;text-align:center;font-size:15.5px;color:#222">375.55</div>
<div class="abs" style="left:261px;top:314px;width:88px;height:36px;line-height:36px;text-align:right;padding-right:6px;font-size:15.5px;color:#fff">27</div>
<div class="abs" style="left:0;top:349.0px;width:349px;height:1px;background:rgba(0,0,0,0.18)"></div>
<div class="abs" style="left:0;top:350px;width:87px;height:36px;background:#ffb8b8"></div>
<div class="abs" style="left:0;top:350px;width:87px;height:36px;line-height:36px;text-align:center;font-size:15.5px;color:#222">5</div>
<div class="abs" style="left:174px;top:350px;width:87px;height:36px;line-height:36px;text-align:center;font-size:15.5px;color:#222">375.5</div>
<div class="abs" style="left:261px;top:350px;width:88px;height:36px;line-height:36px;text-align:right;padding-right:6px;font-size:15.5px;color:#fff">18</div>
<div class="abs" style="left:0;top:385.0px;width:349px;height:1px;background:rgba(0,0,0,0.18)"></div>
<div class="abs" style="left:174px;top:386px;width:87px;height:36px;line-height:36px;text-align:center;font-size:15.5px;color:#222">375.45</div>
<div class="abs" style="left:261px;top:386px;width:88px;height:36px;line-height:36px;text-align:right;padding-right:6px;font-size:15.5px;color:#fff">3</div>
<div class="abs" style="left:0;top:421.0px;width:349px;height:1px;background:rgba(0,0,0,0.18)"></div>
<div class="abs" style="left:0;top:422px;width:87px;height:36px;background:#b6e7fb"></div>
<div class="abs" style="left:0;top:422px;width:87px;height:36px;line-height:36px;text-align:center;font-size:15.5px;color:#222">1</div>
<div class="abs" style="left:87px;top:422px;width:87px;height:36px;line-height:36px;text-align:right;padding-right:6px;font-size:15.5px;color:#fff">6</div>
<div class="abs" style="left:174px;top:422px;width:87px;height:36px;line-height:36px;text-align:center;font-size:15.5px;color:#222">375.4</div>
<div class="abs" style="left:0;top:457.0px;width:349px;height:1px;background:rgba(0,0,0,0.18)"></div>
<div class="abs" style="left:87px;top:458px;width:87px;height:36px;line-height:36px;text-align:right;padding-right:6px;font-size:15.5px;color:#fff">4</div>
<div class="abs" style="left:174px;top:458px;width:87px;height:36px;line-height:36px;text-align:center;font-size:15.5px;color:#222">375.35</div>
<div class="abs" style="left:0;top:493.0px;width:349px;height:1px;background:rgba(0,0,0,0.18)"></div>
<div class="abs" style="left:87px;top:494px;width:87px;height:36px;line-height:36px;text-align:right;padding-right:6px;font-size:15.5px;color:#fff">15</div>
<div class="abs" style="left:174px;top:494px;width:87px;height:36px;line-height:36px;text-align:center;font-size:15.5px;color:#222">375.3</div>
<div class="abs" style="left:0;top:529.0px;width:349px;height:1px;background:rgba(0,0,0,0.18)"></div>
<div class="abs" style="left:87px;top:530px;width:87px;height:36px;line-height:36px;text-align:right;padding-right:6px;font-size:15.5px;color:#fff">9</div>
<div class="abs" style="left:174px;top:530px;width:87px;height:36px;line-height:36px;text-align:center;font-size:15.5px;color:#222">375.25</div>
<div class="abs" style="left:0;top:565.0px;width:349px;height:1px;background:rgba(0,0,0,0.18)"></div>
<div class="abs" style="left:87px;top:566px;width:87px;height:36px;line-height:36px;text-align:right;padding-right:6px;font-size:15.5px;color:#fff">9</div>
<div class="abs" style="left:174px;top:566px;width:87px;height:36px;line-height:36px;text-align:center;font-size:15.5px;color:#222">375.2</div>
<div class="abs" style="left:0;top:601.0px;width:349px;height:1px;background:rgba(0,0,0,0.18)"></div>
<div class="abs" style="left:87px;top:602px;width:87px;height:36px;line-height:36px;text-align:right;padding-right:6px;font-size:15.5px;color:#fff">4</div>
<div class="abs" style="left:174px;top:602px;width:87px;height:36px;line-height:36px;text-align:center;font-size:15.5px;color:#222">375.15</div>
<div class="abs" style="left:0;top:637.0px;width:349px;height:1px;background:rgba(0,0,0,0.18)"></div>
<div class="abs" style="left:87px;top:638px;width:87px;height:36px;line-height:36px;text-align:right;padding-right:6px;font-size:15.5px;color:#fff">5</div>
<div class="abs" style="left:174px;top:638px;width:87px;height:36px;line-height:36px;text-align:center;font-size:15.5px;color:#222">375.1</div>
<div class="abs" style="left:0;top:673.0px;width:349px;height:1px;background:rgba(0,0,0,0.18)"></div>
<div class="abs" style="left:87px;top:674px;width:87px;height:36px;line-height:36px;text-align:right;padding-right:6px;font-size:15.5px;color:#fff">4</div>
<div class="abs" style="left:174px;top:674px;width:87px;height:36px;line-height:36px;text-align:center;font-size:15.5px;color:#222">375.05</div>
<div class="abs" style="left:0;top:709.0px;width:349px;height:1px;background:rgba(0,0,0,0.18)"></div>
<div class="abs" style="left:87px;top:710px;width:87px;height:36px;line-height:36px;text-align:right;padding-right:6px;font-size:15.5px;color:#fff">5</div>
<div class="abs" style="left:174px;top:710px;width:87px;height:36px;line-height:36px;text-align:center;font-size:15.5px;color:#222">375</div>
<div class="abs" style="left:0;top:745.0px;width:349px;height:1px;background:rgba(0,0,0,0.18)"></div>
<div class="abs" style="left:87px;top:746px;width:87px;height:36px;line-height:36px;text-align:right;padding-right:6px;font-size:15.5px;color:#fff">5</div>
<div class="abs" style="left:174px;top:746px;width:87px;height:36px;line-height:36px;text-align:center;font-size:15.5px;color:#222">374.95</div>
<div class="abs" style="left:0;top:781.0px;width:349px;height:1px;background:rgba(0,0,0,0.18)"></div>
<div class="abs" style="left:0;top:815.0px;width:349px;height:1px;background:rgba(0,0,0,0.18)"></div>
<div class="abs" style="left:0;top:849.0px;width:349px;height:1px;background:rgba(0,0,0,0.18)"></div>
<div class="abs" style="left:0;top:883.0px;width:349px;height:1px;background:rgba(0,0,0,0.18)"></div>
<div class="abs" style="left:349px;top:0;width:26px;height:880px;background:#f0f0f0"></div>
<div class="abs" style="left:352px;top:27px;width:21px;height:669px;background:#bcbcbc"></div>
<div class="abs" style="left:356px;top:10px;width:0;height:0;border-left:6px solid transparent;border-right:6px solid transparent;border-bottom:6px solid #bbb"></div>
<div class="abs" style="left:356px;top:864px;width:0;height:0;border-left:6px solid transparent;border-right:6px solid transparent;border-top:6px solid #555"></div>
</div>
<div class="abs" style="left:360px;top:621px;width:1474px;height:2px;background:#c4c4c4"></div>
<div class="abs" style="left:360px;top:621px;width:1px;height:519px;background:#c8c8c8"></div><div class="abs" style="left:360px;top:1165px;width:1498px;height:1px;background:#dfe2e5"></div>
<div class="abs" style="left:361px;top:623px;width:1473px;height:40px;background:#bcbcbc"></div>
<div class="abs" style="left:361px;top:663px;width:1473px;height:2px;background:#dfe1e4"></div>
<div class="tt" style="left:386px;top:634px;color:#363636">TimeStamp</div>
<div class="tt" style="left:619px;top:634px;color:#363636">Trader ID</div>
<div class="tt" style="left:760px;top:634px;color:#363636">Client ID</div>
<div class="tt" style="left:839px;top:634px;color:#363636">Order ID</div>
<div class="tt" style="left:1151px;top:634px;color:#363636">Transaction ID</div>
<div class="tt" style="left:1389px;top:634px;color:#363636">Action</div>
<div class="tt" style="left:1451px;top:634px;color:#363636">Side</div>
<div class="tt" style="left:1501px;top:634px;color:#363636">Price</div>
<div class="tt" style="left:1560px;top:634px;color:#363636">Order Qty</div>
<div class="tt" style="left:1648px;top:634px;color:#363636">Leaves Qty</div>
<div class="tt" style="left:1746px;top:634px;color:#363636">Working Qty</div>
<div class="abs" style="left:376px;top:623px;width:2px;height:40px;background:#d6d6d6"></div>
<div class="abs" style="left:609px;top:623px;width:2px;height:40px;background:#d6d6d6"></div>
<div class="abs" style="left:750px;top:623px;width:2px;height:40px;background:#d6d6d6"></div>
<div class="abs" style="left:829px;top:623px;width:2px;height:40px;background:#d6d6d6"></div>
<div class="abs" style="left:1141px;top:623px;width:2px;height:40px;background:#d6d6d6"></div>
<div class="abs" style="left:1379px;top:623px;width:2px;height:40px;background:#d6d6d6"></div>
<div class="abs" style="left:1441px;top:623px;width:2px;height:40px;background:#d6d6d6"></div>
<div class="abs" style="left:1491px;top:623px;width:2px;height:40px;background:#d6d6d6"></div>
<div class="abs" style="left:1550px;top:623px;width:2px;height:40px;background:#d6d6d6"></div>
<div class="abs" style="left:1638px;top:623px;width:2px;height:40px;background:#d6d6d6"></div>
<div class="abs" style="left:1736px;top:623px;width:2px;height:40px;background:#d6d6d6"></div>
<svg class="abs" style="left:592px;top:641px" width="12" height="10" viewBox="0 0 12 10"><path d="M1 1 H11 L6 9 Z" fill="#8a9be6"/><path d="M3 3 H9 L6 8 Z" fill="#6f86df"/></svg>
<div class="abs" style="left:361px;top:665px;width:1473px;height:475px;overflow:hidden">
<div class="abs" style="left:0;top:0px;width:1473px;height:31px;background:#ffff00"></div>
<div class="abs" style="left:0;top:31px;width:1473px;height:1px;background:#dfe1e4"></div>
<svg class="abs" style="left:4px;top:10px" width="7" height="11" viewBox="0 0 7 11"><path d="M0.5 0.5 L6.5 5.5 L0.5 10.5 Z" fill="#1a8fd3"/></svg>
<svg class="abs" style="left:18px;top:7px" width="71" height="18"><rect x="0" y="0" width="6" height="6" fill="#f5d400"/><rect x="0" y="6" width="6" height="6" fill="#fff200"/><rect x="0" y="12" width="6" height="6" fill="#fff200"/><rect x="6" y="0" width="6" height="6" fill="#f5d400"/><rect x="6" y="6" width="6" height="6" fill="#f8dc10"/><rect x="6" y="12" width="6" height="6" fill="#fff200"/><rect x="12" y="0" width="6" height="6" fill="#f8dc10"/><rect x="12" y="6" width="6" height="6" fill="#f0c400"/><rect x="12" y="12" width="6" height="6" fill="#fff200"/><rect x="18" y="0" width="6" height="6" fill="#ecb400"/><rect x="18" y="6" width="6" height="6" fill="#fbe800"/><rect x="18" y="12" width="6" height="6" fill="#ecb400"/><rect x="24" y="0" width="6" height="6" fill="#fbe800"/><rect x="24" y="6" width="6" height="6" fill="#fbe800"/><rect x="24" y="12" width="6" height="6" fill="#f8dc10"/><rect x="30" y="0" width="6" height="6" fill="#fff200"/><rect x="30" y="6" width="6" height="6" fill="#f0c400"/><rect x="30" y="12" width="6" height="6" fill="#fbe800"/><rect x="36" y="0" width="6" height="6" fill="#f8dc10"/><rect x="36" y="6" width="6" height="6" fill="#f8dc10"/><rect x="36" y="12" width="6" height="6" fill="#f5d400"/><rect x="42" y="0" width="6" height="6" fill="#f0c400"/><rect x="42" y="6" width="6" height="6" fill="#f5d400"/><rect x="42" y="12" width="6" height="6" fill="#f0c400"/><rect x="48" y="0" width="6" height="6" fill="#f5d400"/><rect x="48" y="6" width="6" height="6" fill="#f5d400"/><rect x="48" y="12" width="6" height="6" fill="#f5d400"/><rect x="54" y="0" width="6" height="6" fill="#f5d400"/><rect x="54" y="6" width="6" height="6" fill="#f0c400"/><rect x="54" y="12" width="6" height="6" fill="#f0c400"/><rect x="60" y="0" width="6" height="6" fill="#f8dc10"/><rect x="60" y="6" width="6" height="6" fill="#fff200"/><rect x="60" y="12" width="6" height="6" fill="#f5d400"/><rect x="66" y="0" width="6" height="6" fill="#fff200"/><rect x="66" y="6" width="6" height="6" fill="#fff200"/><rect x="66" y="12" width="6" height="6" fill="#ecb400"/></svg>
<div class="tt" style="left:94px;top:7px;color:#d43030">01:06:16.643.747838</div>
<div class="tt" style="left:254px;top:7px;color:#d43030">Trader426 (67644)</div>
<div class="tt" style="left:473px;top:7px;color:#d43030">6e4e7ce9-93f0-42d9-97c7-e7b7cc90acbe</div>
<div class="tt" style="left:785px;top:7px;color:#d43030">AK9qL4MOWpL2I1YApPCUvZ</div>
<div class="tt" style="left:1023px;top:7px;color:#d43030">Add</div>
<div class="tt" style="left:1085px;top:7px;color:#d43030">Sell</div>
<div class="tt" style="left:1135px;top:7px;color:#d43030">375.5</div>
<div class="tt" style="left:1194px;top:7px;color:#d43030">5</div>
<div class="tt" style="left:1282px;top:7px;color:#d43030">5</div>
<div class="abs" style="left:15px;top:32px;width:1458px;height:31px;background:#0e96d6"></div>
<div class="abs" style="left:0;top:63px;width:1473px;height:1px;background:#dfe1e4"></div>
<svg class="abs" style="left:4px;top:42px" width="7" height="11" viewBox="0 0 7 11"><path d="M0.5 0.5 L6.5 5.5 L0.5 10.5 Z" fill="#1a8fd3"/></svg>
<svg class="abs" style="left:18px;top:39px" width="71" height="18"><rect x="0" y="0" width="6" height="6" fill="#1488c8"/><rect x="0" y="6" width="6" height="6" fill="#4ab0e4"/><rect x="0" y="12" width="6" height="6" fill="#1488c8"/><rect x="6" y="0" width="6" height="6" fill="#1c92d2"/><rect x="6" y="6" width="6" height="6" fill="#66bde8"/><rect x="6" y="12" width="6" height="6" fill="#2aa0dc"/><rect x="12" y="0" width="6" height="6" fill="#3aa8e0"/><rect x="12" y="6" width="6" height="6" fill="#1488c8"/><rect x="12" y="12" width="6" height="6" fill="#4ab0e4"/><rect x="18" y="0" width="6" height="6" fill="#1488c8"/><rect x="18" y="6" width="6" height="6" fill="#4ab0e4"/><rect x="18" y="12" width="6" height="6" fill="#1c92d2"/><rect x="24" y="0" width="6" height="6" fill="#66bde8"/><rect x="24" y="6" width="6" height="6" fill="#3aa8e0"/><rect x="24" y="12" width="6" height="6" fill="#4ab0e4"/><rect x="30" y="0" width="6" height="6" fill="#1c92d2"/><rect x="30" y="6" width="6" height="6" fill="#66bde8"/><rect x="30" y="12" width="6" height="6" fill="#2aa0dc"/><rect x="36" y="0" width="6" height="6" fill="#1c92d2"/><rect x="36" y="6" width="6" height="6" fill="#4ab0e4"/><rect x="36" y="12" width="6" height="6" fill="#4ab0e4"/><rect x="42" y="0" width="6" height="6" fill="#2aa0dc"/><rect x="42" y="6" width="6" height="6" fill="#66bde8"/><rect x="42" y="12" width="6" height="6" fill="#1488c8"/><rect x="48" y="0" width="6" height="6" fill="#1c92d2"/><rect x="48" y="6" width="6" height="6" fill="#4ab0e4"/><rect x="48" y="12" width="6" height="6" fill="#66bde8"/><rect x="54" y="0" width="6" height="6" fill="#1c92d2"/><rect x="54" y="6" width="6" height="6" fill="#4ab0e4"/><rect x="54" y="12" width="6" height="6" fill="#3aa8e0"/><rect x="60" y="0" width="6" height="6" fill="#66bde8"/><rect x="60" y="6" width="6" height="6" fill="#66bde8"/><rect x="60" y="12" width="6" height="6" fill="#4ab0e4"/><rect x="66" y="0" width="6" height="6" fill="#2aa0dc"/><rect x="66" y="6" width="6" height="6" fill="#66bde8"/><rect x="66" y="12" width="6" height="6" fill="#66bde8"/></svg>
<div class="tt" style="left:94px;top:39px;color:#fff">01:06:16.242.782424</div>
<div class="tt" style="left:254px;top:39px;color:#fff">Trader426 (67644)</div>
<div class="tt" style="left:473px;top:39px;color:#fff">ca0ed3d7-632f-42d6-b5cf-4909ef0999a0</div>
<div class="tt" style="left:785px;top:39px;color:#fff">Gqm0ozvwqLW2EEPUCDk3NF</div>
<div class="tt" style="left:1023px;top:39px;color:#fff">Fill</div>
<div class="tt" style="left:1085px;top:39px;color:#fff">Buy</div>
<div class="tt" style="left:1135px;top:39px;color:#fff">375.45</div>
<div class="tt" style="left:1194px;top:39px;color:#fff">1</div>
<div class="tt" style="left:1282px;top:39px;color:#fff">0</div>
<div class="abs" style="left:0;top:95px;width:1473px;height:1px;background:#dfe1e4"></div>
<svg class="abs" style="left:4px;top:74px" width="7" height="11" viewBox="0 0 7 11"><path d="M0.5 0.5 L6.5 5.5 L0.5 10.5 Z" fill="#1a8fd3"/></svg>
<svg class="abs" style="left:18px;top:73px" width="71" height="12"><rect x="0" y="0" width="6" height="6" fill="#f0c8c8"/><rect x="0" y="6" width="6" height="6" fill="#f7e8e8"/><rect x="6" y="0" width="6" height="6" fill="#e6a6a6"/><rect x="6" y="6" width="6" height="6" fill="#eab4b4"/><rect x="12" y="0" width="6" height="6" fill="#f0c8c8"/><rect x="12" y="6" width="6" height="6" fill="#e6a6a6"/><rect x="18" y="0" width="6" height="6" fill="#f7e8e8"/><rect x="18" y="6" width="6" height="6" fill="#f7e8e8"/><rect x="24" y="0" width="6" height="6" fill="#e6a6a6"/><rect x="24" y="6" width="6" height="6" fill="#f0c8c8"/><rect x="30" y="0" width="6" height="6" fill="#f3d2d2"/><rect x="30" y="6" width="6" height="6" fill="#eab4b4"/><rect x="36" y="0" width="6" height="6" fill="#e6a6a6"/><rect x="36" y="6" width="6" height="6" fill="#f3d2d2"/><rect x="42" y="0" width="6" height="6" fill="#e6a6a6"/><rect x="42" y="6" width="6" height="6" fill="#e6a6a6"/><rect x="48" y="0" width="6" height="6" fill="#f6e0e0"/><rect x="48" y="6" width="6" height="6" fill="#f7e8e8"/><rect x="54" y="0" width="6" height="6" fill="#e6a6a6"/><rect x="54" y="6" width="6" height="6" fill="#e6a6a6"/><rect x="60" y="0" width="6" height="6" fill="#e6a6a6"/><rect x="60" y="6" width="6" height="6" fill="#f7e8e8"/><rect x="66" y="0" width="6" height="6" fill="#e6a6a6"/><rect x="66" y="6" width="6" height="6" fill="#f0c8c8"/></svg>
<div class="tt" style="left:94px;top:71px;color:#d43434">01:06:15.777.790644</div>
<div class="tt" style="left:254px;top:71px;color:#d43434">Trader426 (67644)</div>
<div class="tt" style="left:473px;top:71px;color:#d43434">61fdb9e2-7fdc-4b19-babb-d4e51d2a6f64</div>
<div class="tt" style="left:785px;top:71px;color:#d43434">371tNX0zVGoD04fuMa60C6</div>
<div class="tt" style="left:1023px;top:71px;color:#d43434">Cancel</div>
<div class="tt" style="left:1085px;top:71px;color:#d43434">Sell</div>
<div class="tt" style="left:1135px;top:71px;color:#d43434">375.75</div>
<div class="tt" style="left:1194px;top:71px;color:#d43434">5</div>
<div class="tt" style="left:1282px;top:71px;color:#d43434">0</div>
<div class="abs" style="left:0;top:127px;width:1473px;height:1px;background:#dfe1e4"></div>
<svg class="abs" style="left:4px;top:106px" width="7" height="11" viewBox="0 0 7 11"><path d="M0.5 0.5 L6.5 5.5 L0.5 10.5 Z" fill="#1a8fd3"/></svg>
<svg class="abs" style="left:18px;top:103px" width="71" height="18"><rect x="0" y="0" width="6" height="6" fill="#f7e8e8"/><rect x="0" y="6" width="6" height="6" fill="#f3d2d2"/><rect x="0" y="12" width="6" height="6" fill="#f7e8e8"/><rect x="6" y="0" width="6" height="6" fill="#f7e8e8"/><rect x="6" y="6" width="6" height="6" fill="#f7e8e8"/><rect x="6" y="12" width="6" height="6" fill="#efc0c0"/><rect x="12" y="0" width="6" height="6" fill="#f0c8c8"/><rect x="12" y="6" width="6" height="6" fill="#f7e8e8"/><rect x="12" y="12" width="6" height="6" fill="#f6e0e0"/><rect x="18" y="0" width="6" height="6" fill="#e6a6a6"/><rect x="18" y="6" width="6" height="6" fill="#f7e8e8"/><rect x="18" y="12" width="6" height="6" fill="#f6e0e0"/><rect x="24" y="0" width="6" height="6" fill="#f7e8e8"/><rect x="24" y="6" width="6" height="6" fill="#f3d2d2"/><rect x="24" y="12" width="6" height="6" fill="#f3d2d2"/><rect x="30" y="0" width="6" height="6" fill="#eab4b4"/><rect x="30" y="6" width="6" height="6" fill="#efc0c0"/><rect x="30" y="12" width="6" height="6" fill="#f7e8e8"/><rect x="36" y="0" width="6" height="6" fill="#f6e0e0"/><rect x="36" y="6" width="6" height="6" fill="#f3d2d2"/><rect x="36" y="12" width="6" height="6" fill="#f6e0e0"/><rect x="42" y="0" width="6" height="6" fill="#f0c8c8"/><rect x="42" y="6" width="6" height="6" fill="#f0c8c8"/><rect x="42" y="12" width="6" height="6" fill="#e6a6a6"/><rect x="48" y="0" width="6" height="6" fill="#efc0c0"/><rect x="48" y="6" width="6" height="6" fill="#f6e0e0"/><rect x="48" y="12" width="6" height="6" fill="#f6e0e0"/><rect x="54" y="0" width="6" height="6" fill="#f0c8c8"/><rect x="54" y="6" width="6" height="6" fill="#f6e0e0"/><rect x="54" y="12" width="6" height="6" fill="#f7e8e8"/><rect x="60" y="0" width="6" height="6" fill="#f0c8c8"/><rect x="60" y="6" width="6" height="6" fill="#e6a6a6"/><rect x="60" y="12" width="6" height="6" fill="#e6a6a6"/><rect x="66" y="0" width="6" height="6" fill="#eab4b4"/><rect x="66" y="6" width="6" height="6" fill="#f0c8c8"/><rect x="66" y="12" width="6" height="6" fill="#f7e8e8"/></svg>
<div class="tt" style="left:94px;top:103px;color:#d43434">01:06:14.883.052529</div>
<div class="tt" style="left:254px;top:103px;color:#d43434">Trader426 (67644)</div>
<div class="tt" style="left:473px;top:103px;color:#d43434">57ee7ec5-a21e-4d0c-8ae3-067f21b9725f</div>
<div class="tt" style="left:785px;top:103px;color:#d43434">LpVSqVeEsAF6mRAvGKMJ6O</div>
<div class="tt" style="left:1023px;top:103px;color:#d43434">Add</div>
<div class="tt" style="left:1085px;top:103px;color:#d43434">Sell</div>
<div class="tt" style="left:1135px;top:103px;color:#d43434">375.55</div>
<div class="tt" style="left:1194px;top:103px;color:#d43434">5</div>
<div class="tt" style="left:1282px;top:103px;color:#d43434">5</div>
<div class="abs" style="left:0;top:159px;width:1473px;height:1px;background:#dfe1e4"></div>
<svg class="abs" style="left:4px;top:138px" width="7" height="11" viewBox="0 0 7 11"><path d="M0.5 0.5 L6.5 5.5 L0.5 10.5 Z" fill="#1a8fd3"/></svg>
<svg class="abs" style="left:18px;top:135px" width="71" height="18"><rect x="0" y="0" width="6" height="6" fill="#f6e0e0"/><rect x="0" y="6" width="6" height="6" fill="#efc0c0"/><rect x="0" y="12" width="6" height="6" fill="#f0c8c8"/><rect x="6" y="0" width="6" height="6" fill="#f7e8e8"/><rect x="6" y="6" width="6" height="6" fill="#efc0c0"/><rect x="6" y="12" width="6" height="6" fill="#f0c8c8"/><rect x="12" y="0" width="6" height="6" fill="#f3d2d2"/><rect x="12" y="6" width="6" height="6" fill="#eab4b4"/><rect x="12" y="12" width="6" height="6" fill="#f6e0e0"/><rect x="18" y="0" width="6" height="6" fill="#f7e8e8"/><rect x="18" y="6" width="6" height="6" fill="#f0c8c8"/><rect x="18" y="12" width="6" height="6" fill="#efc0c0"/><rect x="24" y="0" width="6" height="6" fill="#efc0c0"/><rect x="24" y="6" width="6" height="6" fill="#f6e0e0"/><rect x="24" y="12" width="6" height="6" fill="#f0c8c8"/><rect x="30" y="0" width="6" height="6" fill="#f6e0e0"/><rect x="30" y="6" width="6" height="6" fill="#f0c8c8"/><rect x="30" y="12" width="6" height="6" fill="#f6e0e0"/><rect x="36" y="0" width="6" height="6" fill="#f6e0e0"/><rect x="36" y="6" width="6" height="6" fill="#f7e8e8"/><rect x="36" y="12" width="6" height="6" fill="#efc0c0"/><rect x="42" y="0" width="6" height="6" fill="#eab4b4"/><rect x="42" y="6" width="6" height="6" fill="#eab4b4"/><rect x="42" y="12" width="6" height="6" fill="#f7e8e8"/><rect x="48" y="0" width="6" height="6" fill="#f6e0e0"/><rect x="48" y="6" width="6" height="6" fill="#efc0c0"/><rect x="48" y="12" width="6" height="6" fill="#f0c8c8"/><rect x="54" y="0" width="6" height="6" fill="#e6a6a6"/><rect x="54" y="6" width="6" height="6" fill="#eab4b4"/><rect x="54" y="12" width="6" height="6" fill="#f3d2d2"/><rect x="60" y="0" width="6" height="6" fill="#eab4b4"/><rect x="60" y="6" width="6" height="6" fill="#e6a6a6"/><rect x="60" y="12" width="6" height="6" fill="#f0c8c8"/><rect x="66" y="0" width="6" height="6" fill="#f7e8e8"/><rect x="66" y="6" width="6" height="6" fill="#eab4b4"/><rect x="66" y="12" width="6" height="6" fill="#f3d2d2"/></svg>
<div class="tt" style="left:94px;top:135px;color:#d43434">01:06:14.650.210663</div>
<div class="tt" style="left:254px;top:135px;color:#d43434">Trader426 (67644)</div>
<div class="tt" style="left:473px;top:135px;color:#d43434">ddf3fbf8-7718-487a-ab7f-cdb5453402ac</div>
<div class="tt" style="left:785px;top:135px;color:#d43434">Gg1yuZw1nfSDt8kYXuy2ZM</div>
<div class="tt" style="left:1023px;top:135px;color:#d43434">Add</div>
<div class="tt" style="left:1085px;top:135px;color:#d43434">Sell</div>
<div class="tt" style="left:1135px;top:135px;color:#d43434">375.55</div>
<div class="tt" style="left:1194px;top:135px;color:#d43434">5</div>
<div class="tt" style="left:1282px;top:135px;color:#d43434">5</div>
<div class="abs" style="left:0;top:191px;width:1473px;height:1px;background:#dfe1e4"></div>
<svg class="abs" style="left:4px;top:170px" width="7" height="11" viewBox="0 0 7 11"><path d="M0.5 0.5 L6.5 5.5 L0.5 10.5 Z" fill="#1a8fd3"/></svg>
<svg class="abs" style="left:18px;top:169px" width="71" height="12"><rect x="0" y="0" width="6" height="6" fill="#e6a6a6"/><rect x="0" y="6" width="6" height="6" fill="#eab4b4"/><rect x="6" y="0" width="6" height="6" fill="#e6a6a6"/><rect x="6" y="6" width="6" height="6" fill="#efc0c0"/><rect x="12" y="0" width="6" height="6" fill="#f6e0e0"/><rect x="12" y="6" width="6" height="6" fill="#f6e0e0"/><rect x="18" y="0" width="6" height="6" fill="#eab4b4"/><rect x="18" y="6" width="6" height="6" fill="#e6a6a6"/><rect x="24" y="0" width="6" height="6" fill="#efc0c0"/><rect x="24" y="6" width="6" height="6" fill="#e6a6a6"/><rect x="30" y="0" width="6" height="6" fill="#eab4b4"/><rect x="30" y="6" width="6" height="6" fill="#eab4b4"/><rect x="36" y="0" width="6" height="6" fill="#f0c8c8"/><rect x="36" y="6" width="6" height="6" fill="#efc0c0"/><rect x="42" y="0" width="6" height="6" fill="#eab4b4"/><rect x="42" y="6" width="6" height="6" fill="#f0c8c8"/><rect x="48" y="0" width="6" height="6" fill="#efc0c0"/><rect x="48" y="6" width="6" height="6" fill="#f0c8c8"/><rect x="54" y="0" width="6" height="6" fill="#f6e0e0"/><rect x="54" y="6" width="6" height="6" fill="#f7e8e8"/><rect x="60" y="0" width="6" height="6" fill="#f3d2d2"/><rect x="60" y="6" width="6" height="6" fill="#eab4b4"/><rect x="66" y="0" width="6" height="6" fill="#f0c8c8"/><rect x="66" y="6" width="6" height="6" fill="#efc0c0"/></svg>
<div class="tt" style="left:94px;top:167px;color:#d43434">01:06:14.167.401478</div>
<div class="tt" style="left:254px;top:167px;color:#d43434">Trader426 (67644)</div>
<div class="tt" style="left:473px;top:167px;color:#d43434">5bfba58a-5a2d-452d-9128-86ad8e9623cc</div>
<div class="tt" style="left:785px;top:167px;color:#d43434">2L6ip9A5j3WAsM6NliYgPz</div>
<div class="tt" style="left:1023px;top:167px;color:#d43434">Add</div>
<div class="tt" style="left:1085px;top:167px;color:#d43434">Sell</div>
<div class="tt" style="left:1135px;top:167px;color:#d43434">375.6</div>
<div class="tt" style="left:1194px;top:167px;color:#d43434">5</div>
<div class="tt" style="left:1282px;top:167px;color:#d43434">5</div>
<div class="abs" style="left:0;top:223px;width:1473px;height:1px;background:#dfe1e4"></div>
<svg class="abs" style="left:4px;top:202px" width="7" height="11" viewBox="0 0 7 11"><path d="M0.5 0.5 L6.5 5.5 L0.5 10.5 Z" fill="#1a8fd3"/></svg>
<svg class="abs" style="left:18px;top:199px" width="71" height="18"><rect x="0" y="0" width="6" height="6" fill="#f7e8e8"/><rect x="0" y="6" width="6" height="6" fill="#f3d2d2"/><rect x="0" y="12" width="6" height="6" fill="#f6e0e0"/><rect x="6" y="0" width="6" height="6" fill="#e6a6a6"/><rect x="6" y="6" width="6" height="6" fill="#e6a6a6"/><rect x="6" y="12" width="6" height="6" fill="#efc0c0"/><rect x="12" y="0" width="6" height="6" fill="#f3d2d2"/><rect x="12" y="6" width="6" height="6" fill="#f6e0e0"/><rect x="12" y="12" width="6" height="6" fill="#efc0c0"/><rect x="18" y="0" width="6" height="6" fill="#eab4b4"/><rect x="18" y="6" width="6" height="6" fill="#efc0c0"/><rect x="18" y="12" width="6" height="6" fill="#f6e0e0"/><rect x="24" y="0" width="6" height="6" fill="#f0c8c8"/><rect x="24" y="6" width="6" height="6" fill="#efc0c0"/><rect x="24" y="12" width="6" height="6" fill="#f3d2d2"/><rect x="30" y="0" width="6" height="6" fill="#eab4b4"/><rect x="30" y="6" width="6" height="6" fill="#f3d2d2"/><rect x="30" y="12" width="6" height="6" fill="#f3d2d2"/><rect x="36" y="0" width="6" height="6" fill="#f7e8e8"/><rect x="36" y="6" width="6" height="6" fill="#f7e8e8"/><rect x="36" y="12" width="6" height="6" fill="#eab4b4"/><rect x="42" y="0" width="6" height="6" fill="#f7e8e8"/><rect x="42" y="6" width="6" height="6" fill="#f0c8c8"/><rect x="42" y="12" width="6" height="6" fill="#f7e8e8"/><rect x="48" y="0" width="6" height="6" fill="#f3d2d2"/><rect x="48" y="6" width="6" height="6" fill="#eab4b4"/><rect x="48" y="12" width="6" height="6" fill="#f7e8e8"/><rect x="54" y="0" width="6" height="6" fill="#f3d2d2"/><rect x="54" y="6" width="6" height="6" fill="#f7e8e8"/><rect x="54" y="12" width="6" height="6" fill="#f0c8c8"/><rect x="60" y="0" width="6" height="6" fill="#f0c8c8"/><rect x="60" y="6" width="6" height="6" fill="#eab4b4"/><rect x="60" y="12" width="6" height="6" fill="#eab4b4"/><rect x="66" y="0" width="6" height="6" fill="#f3d2d2"/><rect x="66" y="6" width="6" height="6" fill="#eab4b4"/><rect x="66" y="12" width="6" height="6" fill="#f6e0e0"/></svg>
<div class="tt" style="left:94px;top:199px;color:#d43434">01:06:13.811.448440</div>
<div class="tt" style="left:254px;top:199px;color:#d43434">Trader426 (67644)</div>
<div class="tt" style="left:473px;top:199px;color:#d43434">057dbcb6-8353-4e93-a826-73faad55e090</div>
<div class="tt" style="left:785px;top:199px;color:#d43434">JL9luJu9oNbKjyNjeyqw7x</div>
<div class="tt" style="left:1023px;top:199px;color:#d43434">Add</div>
<div class="tt" style="left:1085px;top:199px;color:#d43434">Sell</div>
<div class="tt" style="left:1135px;top:199px;color:#d43434">375.6</div>
<div class="tt" style="left:1194px;top:199px;color:#d43434">5</div>
<div class="tt" style="left:1282px;top:199px;color:#d43434">5</div>
<div class="abs" style="left:0;top:255px;width:1473px;height:1px;background:#dfe1e4"></div>
<svg class="abs" style="left:4px;top:234px" width="7" height="11" viewBox="0 0 7 11"><path d="M0.5 0.5 L6.5 5.5 L0.5 10.5 Z" fill="#1a8fd3"/></svg>
<svg class="abs" style="left:18px;top:231px" width="71" height="18"><rect x="0" y="0" width="6" height="6" fill="#f0c8c8"/><rect x="0" y="6" width="6" height="6" fill="#e6a6a6"/><rect x="0" y="12" width="6" height="6" fill="#e6a6a6"/><rect x="6" y="0" width="6" height="6" fill="#efc0c0"/><rect x="6" y="6" width="6" height="6" fill="#f7e8e8"/><rect x="6" y="12" width="6" height="6" fill="#f7e8e8"/><rect x="12" y="0" width="6" height="6" fill="#f3d2d2"/><rect x="12" y="6" width="6" height="6" fill="#f3d2d2"/><rect x="12" y="12" width="6" height="6" fill="#efc0c0"/><rect x="18" y="0" width="6" height="6" fill="#eab4b4"/><rect x="18" y="6" width="6" height="6" fill="#f0c8c8"/><rect x="18" y="12" width="6" height="6" fill="#f3d2d2"/><rect x="24" y="0" width="6" height="6" fill="#e6a6a6"/><rect x="24" y="6" width="6" height="6" fill="#efc0c0"/><rect x="24" y="12" width="6" height="6" fill="#f6e0e0"/><rect x="30" y="0" width="6" height="6" fill="#eab4b4"/><rect x="30" y="6" width="6" height="6" fill="#eab4b4"/><rect x="30" y="12" width="6" height="6" fill="#e6a6a6"/><rect x="36" y="0" width="6" height="6" fill="#f6e0e0"/><rect x="36" y="6" width="6" height="6" fill="#f7e8e8"/><rect x="36" y="12" width="6" height="6" fill="#f7e8e8"/><rect x="42" y="0" width="6" height="6" fill="#eab4b4"/><rect x="42" y="6" width="6" height="6" fill="#efc0c0"/><rect x="42" y="12" width="6" height="6" fill="#eab4b4"/><rect x="48" y="0" width="6" height="6" fill="#f0c8c8"/><rect x="48" y="6" width="6" height="6" fill="#f0c8c8"/><rect x="48" y="12" width="6" height="6" fill="#e6a6a6"/><rect x="54" y="0" width="6" height="6" fill="#f0c8c8"/><rect x="54" y="6" width="6" height="6" fill="#f0c8c8"/><rect x="54" y="12" width="6" height="6" fill="#f7e8e8"/><rect x="60" y="0" width="6" height="6" fill="#e6a6a6"/><rect x="60" y="6" width="6" height="6" fill="#f0c8c8"/><rect x="60" y="12" width="6" height="6" fill="#f0c8c8"/><rect x="66" y="0" width="6" height="6" fill="#eab4b4"/><rect x="66" y="6" width="6" height="6" fill="#f6e0e0"/><rect x="66" y="12" width="6" height="6" fill="#f6e0e0"/></svg>
<div class="tt" style="left:94px;top:231px;color:#d43434">01:06:13.001.966799</div>
<div class="tt" style="left:254px;top:231px;color:#d43434">Trader426 (67644)</div>
<div class="tt" style="left:473px;top:231px;color:#d43434">f5d021dd-be4d-4c37-a011-ca8fa7d4c5d2</div>
<div class="tt" style="left:785px;top:231px;color:#d43434">Kd3Myq35IiRCaWTk8eX2wf</div>
<div class="tt" style="left:1023px;top:231px;color:#d43434">Add</div>
<div class="tt" style="left:1085px;top:231px;color:#d43434">Sell</div>
<div class="tt" style="left:1135px;top:231px;color:#d43434">375.65</div>
<div class="tt" style="left:1194px;top:231px;color:#d43434">5</div>
<div class="tt" style="left:1282px;top:231px;color:#d43434">5</div>
<div class="abs" style="left:0;top:287px;width:1473px;height:1px;background:#dfe1e4"></div>
<svg class="abs" style="left:4px;top:266px" width="7" height="11" viewBox="0 0 7 11"><path d="M0.5 0.5 L6.5 5.5 L0.5 10.5 Z" fill="#1a8fd3"/></svg>
<svg class="abs" style="left:18px;top:265px" width="71" height="12"><rect x="0" y="0" width="6" height="6" fill="#f0c8c8"/><rect x="0" y="6" width="6" height="6" fill="#f7e8e8"/><rect x="6" y="0" width="6" height="6" fill="#efc0c0"/><rect x="6" y="6" width="6" height="6" fill="#f6e0e0"/><rect x="12" y="0" width="6" height="6" fill="#f7e8e8"/><rect x="12" y="6" width="6" height="6" fill="#f3d2d2"/><rect x="18" y="0" width="6" height="6" fill="#f7e8e8"/><rect x="18" y="6" width="6" height="6" fill="#eab4b4"/><rect x="24" y="0" width="6" height="6" fill="#f3d2d2"/><rect x="24" y="6" width="6" height="6" fill="#f0c8c8"/><rect x="30" y="0" width="6" height="6" fill="#f6e0e0"/><rect x="30" y="6" width="6" height="6" fill="#eab4b4"/><rect x="36" y="0" width="6" height="6" fill="#f0c8c8"/><rect x="36" y="6" width="6" height="6" fill="#f0c8c8"/><rect x="42" y="0" width="6" height="6" fill="#f0c8c8"/><rect x="42" y="6" width="6" height="6" fill="#f7e8e8"/><rect x="48" y="0" width="6" height="6" fill="#efc0c0"/><rect x="48" y="6" width="6" height="6" fill="#eab4b4"/><rect x="54" y="0" width="6" height="6" fill="#f0c8c8"/><rect x="54" y="6" width="6" height="6" fill="#f6e0e0"/><rect x="60" y="0" width="6" height="6" fill="#f0c8c8"/><rect x="60" y="6" width="6" height="6" fill="#f6e0e0"/><rect x="66" y="0" width="6" height="6" fill="#e6a6a6"/><rect x="66" y="6" width="6" height="6" fill="#f3d2d2"/></svg>
<div class="tt" style="left:94px;top:263px;color:#d43434">01:06:12.639.350811</div>
<div class="tt" style="left:254px;top:263px;color:#d43434">Trader426 (67644)</div>
<div class="tt" style="left:473px;top:263px;color:#d43434">61fdb9e2-7fdc-4b19-babb-d4e51d2a6f64</div>
<div class="tt" style="left:785px;top:263px;color:#d43434">9tUZl7RBzhL4kz0GAffgKp</div>
<div class="tt" style="left:1023px;top:263px;color:#d43434">Add</div>
<div class="tt" style="left:1085px;top:263px;color:#d43434">Sell</div>
<div class="tt" style="left:1135px;top:263px;color:#d43434">375.75</div>
<div class="tt" style="left:1194px;top:263px;color:#d43434">5</div>
<div class="tt" style="left:1282px;top:263px;color:#d43434">5</div>
<div class="abs" style="left:0;top:319px;width:1473px;height:1px;background:#dfe1e4"></div>
<svg class="abs" style="left:4px;top:298px" width="7" height="11" viewBox="0 0 7 11"><path d="M0.5 0.5 L6.5 5.5 L0.5 10.5 Z" fill="#1a8fd3"/></svg>
<svg class="abs" style="left:18px;top:295px" width="71" height="18"><rect x="0" y="0" width="6" height="6" fill="#a8d4ee"/><rect x="0" y="6" width="6" height="6" fill="#bfe0f2"/><rect x="0" y="12" width="6" height="6" fill="#cce6f4"/><rect x="6" y="0" width="6" height="6" fill="#cce6f4"/><rect x="6" y="6" width="6" height="6" fill="#98cbea"/><rect x="6" y="12" width="6" height="6" fill="#d6ebf6"/><rect x="12" y="0" width="6" height="6" fill="#d6ebf6"/><rect x="12" y="6" width="6" height="6" fill="#bfe0f2"/><rect x="12" y="12" width="6" height="6" fill="#98cbea"/><rect x="18" y="0" width="6" height="6" fill="#cce6f4"/><rect x="18" y="6" width="6" height="6" fill="#a8d4ee"/><rect x="18" y="12" width="6" height="6" fill="#98cbea"/><rect x="24" y="0" width="6" height="6" fill="#98cbea"/><rect x="24" y="6" width="6" height="6" fill="#d6ebf6"/><rect x="24" y="12" width="6" height="6" fill="#b4daf0"/><rect x="30" y="0" width="6" height="6" fill="#bfe0f2"/><rect x="30" y="6" width="6" height="6" fill="#cce6f4"/><rect x="30" y="12" width="6" height="6" fill="#98cbea"/><rect x="36" y="0" width="6" height="6" fill="#a8d4ee"/><rect x="36" y="6" width="6" height="6" fill="#cce6f4"/><rect x="36" y="12" width="6" height="6" fill="#b4daf0"/><rect x="42" y="0" width="6" height="6" fill="#e4f2f9"/><rect x="42" y="6" width="6" height="6" fill="#bfe0f2"/><rect x="42" y="12" width="6" height="6" fill="#a8d4ee"/><rect x="48" y="0" width="6" height="6" fill="#e4f2f9"/><rect x="48" y="6" width="6" height="6" fill="#98cbea"/><rect x="48" y="12" width="6" height="6" fill="#98cbea"/><rect x="54" y="0" width="6" height="6" fill="#a8d4ee"/><rect x="54" y="6" width="6" height="6" fill="#d6ebf6"/><rect x="54" y="12" width="6" height="6" fill="#98cbea"/><rect x="60" y="0" width="6" height="6" fill="#bfe0f2"/><rect x="60" y="6" width="6" height="6" fill="#e4f2f9"/><rect x="60" y="12" width="6" height="6" fill="#b4daf0"/><rect x="66" y="0" width="6" height="6" fill="#d6ebf6"/><rect x="66" y="6" width="6" height="6" fill="#e4f2f9"/><rect x="66" y="12" width="6" height="6" fill="#a8d4ee"/></svg>
<div class="tt" style="left:94px;top:295px;color:#1a90d5">01:06:11.855.440254</div>
<div class="tt" style="left:254px;top:295px;color:#1a90d5">Trader426 (67644)</div>
<div class="tt" style="left:473px;top:295px;color:#1a90d5">fd573500-bb91-45a5-944f-a9bcc896e6d8</div>
<div class="tt" style="left:785px;top:295px;color:#1a90d5">Fji0U2Temm12hQfojXRZ5q</div>
<div class="tt" style="left:1023px;top:295px;color:#1a90d5">Add</div>
<div class="tt" style="left:1085px;top:295px;color:#1a90d5">Buy</div>
<div class="tt" style="left:1135px;top:295px;color:#1a90d5">375.4</div>
<div class="tt" style="left:1194px;top:295px;color:#1a90d5">1</div>
<div class="tt" style="left:1282px;top:295px;color:#1a90d5">1</div>
<div class="abs" style="left:0;top:351px;width:1473px;height:1px;background:#dfe1e4"></div>
<svg class="abs" style="left:4px;top:330px" width="7" height="11" viewBox="0 0 7 11"><path d="M0.5 0.5 L6.5 5.5 L0.5 10.5 Z" fill="#1a8fd3"/></svg>
<svg class="abs" style="left:18px;top:327px" width="71" height="18"><rect x="0" y="0" width="6" height="6" fill="#cce6f4"/><rect x="0" y="6" width="6" height="6" fill="#b4daf0"/><rect x="0" y="12" width="6" height="6" fill="#b4daf0"/><rect x="6" y="0" width="6" height="6" fill="#98cbea"/><rect x="6" y="6" width="6" height="6" fill="#bfe0f2"/><rect x="6" y="12" width="6" height="6" fill="#cce6f4"/><rect x="12" y="0" width="6" height="6" fill="#cce6f4"/><rect x="12" y="6" width="6" height="6" fill="#e4f2f9"/><rect x="12" y="12" width="6" height="6" fill="#a8d4ee"/><rect x="18" y="0" width="6" height="6" fill="#e4f2f9"/><rect x="18" y="6" width="6" height="6" fill="#98cbea"/><rect x="18" y="12" width="6" height="6" fill="#e4f2f9"/><rect x="24" y="0" width="6" height="6" fill="#d6ebf6"/><rect x="24" y="6" width="6" height="6" fill="#98cbea"/><rect x="24" y="12" width="6" height="6" fill="#cce6f4"/><rect x="30" y="0" width="6" height="6" fill="#98cbea"/><rect x="30" y="6" width="6" height="6" fill="#a8d4ee"/><rect x="30" y="12" width="6" height="6" fill="#e4f2f9"/><rect x="36" y="0" width="6" height="6" fill="#d6ebf6"/><rect x="36" y="6" width="6" height="6" fill="#d6ebf6"/><rect x="36" y="12" width="6" height="6" fill="#b4daf0"/><rect x="42" y="0" width="6" height="6" fill="#98cbea"/><rect x="42" y="6" width="6" height="6" fill="#d6ebf6"/><rect x="42" y="12" width="6" height="6" fill="#bfe0f2"/><rect x="48" y="0" width="6" height="6" fill="#cce6f4"/><rect x="48" y="6" width="6" height="6" fill="#e4f2f9"/><rect x="48" y="12" width="6" height="6" fill="#d6ebf6"/><rect x="54" y="0" width="6" height="6" fill="#98cbea"/><rect x="54" y="6" width="6" height="6" fill="#cce6f4"/><rect x="54" y="12" width="6" height="6" fill="#98cbea"/><rect x="60" y="0" width="6" height="6" fill="#b4daf0"/><rect x="60" y="6" width="6" height="6" fill="#e4f2f9"/><rect x="60" y="12" width="6" height="6" fill="#bfe0f2"/><rect x="66" y="0" width="6" height="6" fill="#a8d4ee"/><rect x="66" y="6" width="6" height="6" fill="#a8d4ee"/><rect x="66" y="12" width="6" height="6" fill="#a8d4ee"/></svg>
<div class="tt" style="left:94px;top:327px;color:#1a90d5">01:06:11.397.914234</div>
<div class="tt" style="left:254px;top:327px;color:#1a90d5">Trader426 (67644)</div>
<div class="tt" style="left:473px;top:327px;color:#1a90d5">ca0ed3d7-632f-42d6-b5cf-4909ef0999a0</div>
<div class="tt" style="left:785px;top:327px;color:#1a90d5">3iPu4zQFJx93KeVaAnyQes</div>
<div class="tt" style="left:1023px;top:327px;color:#1a90d5">Add</div>
<div class="tt" style="left:1085px;top:327px;color:#1a90d5">Buy</div>
<div class="tt" style="left:1135px;top:327px;color:#1a90d5">375.45</div>
<div class="tt" style="left:1194px;top:327px;color:#1a90d5">1</div>
<div class="tt" style="left:1282px;top:327px;color:#1a90d5">1</div>
<div class="abs" style="left:0;top:383px;width:1473px;height:1px;background:#dfe1e4"></div>
<svg class="abs" style="left:4px;top:362px" width="7" height="11" viewBox="0 0 7 11"><path d="M0.5 0.5 L6.5 5.5 L0.5 10.5 Z" fill="#1a8fd3"/></svg>
<svg class="abs" style="left:18px;top:361px" width="71" height="12"><rect x="0" y="0" width="6" height="6" fill="#b4daf0"/><rect x="0" y="6" width="6" height="6" fill="#bfe0f2"/><rect x="6" y="0" width="6" height="6" fill="#a8d4ee"/><rect x="6" y="6" width="6" height="6" fill="#cce6f4"/><rect x="12" y="0" width="6" height="6" fill="#bfe0f2"/><rect x="12" y="6" width="6" height="6" fill="#cce6f4"/><rect x="18" y="0" width="6" height="6" fill="#cce6f4"/><rect x="18" y="6" width="6" height="6" fill="#98cbea"/><rect x="24" y="0" width="6" height="6" fill="#b4daf0"/><rect x="24" y="6" width="6" height="6" fill="#bfe0f2"/><rect x="30" y="0" width="6" height="6" fill="#e4f2f9"/><rect x="30" y="6" width="6" height="6" fill="#bfe0f2"/><rect x="36" y="0" width="6" height="6" fill="#e4f2f9"/><rect x="36" y="6" width="6" height="6" fill="#cce6f4"/><rect x="42" y="0" width="6" height="6" fill="#98cbea"/><rect x="42" y="6" width="6" height="6" fill="#bfe0f2"/><rect x="48" y="0" width="6" height="6" fill="#bfe0f2"/><rect x="48" y="6" width="6" height="6" fill="#e4f2f9"/><rect x="54" y="0" width="6" height="6" fill="#cce6f4"/><rect x="54" y="6" width="6" height="6" fill="#cce6f4"/><rect x="60" y="0" width="6" height="6" fill="#b4daf0"/><rect x="60" y="6" width="6" height="6" fill="#cce6f4"/><rect x="66" y="0" width="6" height="6" fill="#e4f2f9"/><rect x="66" y="6" width="6" height="6" fill="#a8d4ee"/></svg>
<div class="tt" style="left:94px;top:359px;color:#1a90d5">01:06:04.752.229072</div>
<div class="tt" style="left:254px;top:359px;color:#1a90d5">Trader426 (67644)</div>
<div class="tt" style="left:473px;top:359px;color:#1a90d5">b9679eb4-c7e0-46b9-94e0-9e09bda4c398</div>
<div class="tt" style="left:785px;top:359px;color:#1a90d5">AfY1UVZFX5O7Dlk5RmicIR</div>
<div class="tt" style="left:1023px;top:359px;color:#1a90d5">Cancel</div>
<div class="tt" style="left:1085px;top:359px;color:#1a90d5">Buy</div>
<div class="tt" style="left:1135px;top:359px;color:#1a90d5">375.45</div>
<div class="tt" style="left:1194px;top:359px;color:#1a90d5">5</div>
<div class="tt" style="left:1282px;top:359px;color:#1a90d5">0</div>
<div class="abs" style="left:0;top:415px;width:1473px;height:1px;background:#dfe1e4"></div>
<svg class="abs" style="left:4px;top:394px" width="7" height="11" viewBox="0 0 7 11"><path d="M0.5 0.5 L6.5 5.5 L0.5 10.5 Z" fill="#1a8fd3"/></svg>
<svg class="abs" style="left:18px;top:391px" width="71" height="18"><rect x="0" y="0" width="6" height="6" fill="#cce6f4"/><rect x="0" y="6" width="6" height="6" fill="#b4daf0"/><rect x="0" y="12" width="6" height="6" fill="#e4f2f9"/><rect x="6" y="0" width="6" height="6" fill="#98cbea"/><rect x="6" y="6" width="6" height="6" fill="#98cbea"/><rect x="6" y="12" width="6" height="6" fill="#a8d4ee"/><rect x="12" y="0" width="6" height="6" fill="#e4f2f9"/><rect x="12" y="6" width="6" height="6" fill="#cce6f4"/><rect x="12" y="12" width="6" height="6" fill="#cce6f4"/><rect x="18" y="0" width="6" height="6" fill="#b4daf0"/><rect x="18" y="6" width="6" height="6" fill="#e4f2f9"/><rect x="18" y="12" width="6" height="6" fill="#bfe0f2"/><rect x="24" y="0" width="6" height="6" fill="#a8d4ee"/><rect x="24" y="6" width="6" height="6" fill="#bfe0f2"/><rect x="24" y="12" width="6" height="6" fill="#98cbea"/><rect x="30" y="0" width="6" height="6" fill="#cce6f4"/><rect x="30" y="6" width="6" height="6" fill="#d6ebf6"/><rect x="30" y="12" width="6" height="6" fill="#cce6f4"/><rect x="36" y="0" width="6" height="6" fill="#98cbea"/><rect x="36" y="6" width="6" height="6" fill="#bfe0f2"/><rect x="36" y="12" width="6" height="6" fill="#e4f2f9"/><rect x="42" y="0" width="6" height="6" fill="#cce6f4"/><rect x="42" y="6" width="6" height="6" fill="#cce6f4"/><rect x="42" y="12" width="6" height="6" fill="#a8d4ee"/><rect x="48" y="0" width="6" height="6" fill="#a8d4ee"/><rect x="48" y="6" width="6" height="6" fill="#bfe0f2"/><rect x="48" y="12" width="6" height="6" fill="#bfe0f2"/><rect x="54" y="0" width="6" height="6" fill="#e4f2f9"/><rect x="54" y="6" width="6" height="6" fill="#98cbea"/><rect x="54" y="12" width="6" height="6" fill="#e4f2f9"/><rect x="60" y="0" width="6" height="6" fill="#e4f2f9"/><rect x="60" y="6" width="6" height="6" fill="#bfe0f2"/><rect x="60" y="12" width="6" height="6" fill="#e4f2f9"/><rect x="66" y="0" width="6" height="6" fill="#cce6f4"/><rect x="66" y="6" width="6" height="6" fill="#98cbea"/><rect x="66" y="12" width="6" height="6" fill="#a8d4ee"/></svg>
<div class="tt" style="left:94px;top:391px;color:#1a90d5">01:06:04.271.825361</div>
<div class="tt" style="left:254px;top:391px;color:#1a90d5">Trader426 (67644)</div>
<div class="tt" style="left:473px;top:391px;color:#1a90d5">77f0cd5a-4597-41cc-8960-6afbb3a195fa</div>
<div class="tt" style="left:785px;top:391px;color:#1a90d5">C7Zb9rvYme2dT3esVJILX</div>
<div class="tt" style="left:1023px;top:391px;color:#1a90d5">Cancel</div>
<div class="tt" style="left:1085px;top:391px;color:#1a90d5">Buy</div>
<div class="tt" style="left:1135px;top:391px;color:#1a90d5">375.5</div>
<div class="tt" style="left:1194px;top:391px;color:#1a90d5">5</div>
<div class="tt" style="left:1282px;top:391px;color:#1a90d5">0</div>
<div class="abs" style="left:0;top:447px;width:1473px;height:1px;background:#dfe1e4"></div>
<svg class="abs" style="left:4px;top:426px" width="7" height="11" viewBox="0 0 7 11"><path d="M0.5 0.5 L6.5 5.5 L0.5 10.5 Z" fill="#1a8fd3"/></svg>
<svg class="abs" style="left:18px;top:423px" width="71" height="18"><rect x="0" y="0" width="6" height="6" fill="#d6ebf6"/><rect x="0" y="6" width="6" height="6" fill="#e4f2f9"/><rect x="0" y="12" width="6" height="6" fill="#b4daf0"/><rect x="6" y="0" width="6" height="6" fill="#b4daf0"/><rect x="6" y="6" width="6" height="6" fill="#e4f2f9"/><rect x="6" y="12" width="6" height="6" fill="#a8d4ee"/><rect x="12" y="0" width="6" height="6" fill="#d6ebf6"/><rect x="12" y="6" width="6" height="6" fill="#cce6f4"/><rect x="12" y="12" width="6" height="6" fill="#98cbea"/><rect x="18" y="0" width="6" height="6" fill="#a8d4ee"/><rect x="18" y="6" width="6" height="6" fill="#bfe0f2"/><rect x="18" y="12" width="6" height="6" fill="#cce6f4"/><rect x="24" y="0" width="6" height="6" fill="#d6ebf6"/><rect x="24" y="6" width="6" height="6" fill="#b4daf0"/><rect x="24" y="12" width="6" height="6" fill="#d6ebf6"/><rect x="30" y="0" width="6" height="6" fill="#a8d4ee"/><rect x="30" y="6" width="6" height="6" fill="#bfe0f2"/><rect x="30" y="12" width="6" height="6" fill="#98cbea"/><rect x="36" y="0" width="6" height="6" fill="#a8d4ee"/><rect x="36" y="6" width="6" height="6" fill="#cce6f4"/><rect x="36" y="12" width="6" height="6" fill="#a8d4ee"/><rect x="42" y="0" width="6" height="6" fill="#a8d4ee"/><rect x="42" y="6" width="6" height="6" fill="#cce6f4"/><rect x="42" y="12" width="6" height="6" fill="#a8d4ee"/><rect x="48" y="0" width="6" height="6" fill="#cce6f4"/><rect x="48" y="6" width="6" height="6" fill="#bfe0f2"/><rect x="48" y="12" width="6" height="6" fill="#cce6f4"/><rect x="54" y="0" width="6" height="6" fill="#cce6f4"/><rect x="54" y="6" width="6" height="6" fill="#a8d4ee"/><rect x="54" y="12" width="6" height="6" fill="#e4f2f9"/><rect x="60" y="0" width="6" height="6" fill="#b4daf0"/><rect x="60" y="6" width="6" height="6" fill="#d6ebf6"/><rect x="60" y="12" width="6" height="6" fill="#98cbea"/><rect x="66" y="0" width="6" height="6" fill="#a8d4ee"/><rect x="66" y="6" width="6" height="6" fill="#bfe0f2"/><rect x="66" y="12" width="6" height="6" fill="#98cbea"/></svg>
<div class="tt" style="left:94px;top:423px;color:#1a90d5">01:06:04.271.715792</div>
<div class="tt" style="left:254px;top:423px;color:#1a90d5">Trader426 (67644)</div>
<div class="tt" style="left:473px;top:423px;color:#1a90d5">e04d25dd-7000-4b8a-a97c-e709c6d4e38b</div>
<div class="tt" style="left:785px;top:423px;color:#1a90d5">4ZctAYcdhQeAqpw8O7RnsV</div>
<div class="tt" style="left:1023px;top:423px;color:#1a90d5">Cancel</div>
<div class="tt" style="left:1085px;top:423px;color:#1a90d5">Buy</div>
<div class="tt" style="left:1135px;top:423px;color:#1a90d5">375.5</div>
<div class="tt" style="left:1194px;top:423px;color:#1a90d5">5</div>
<div class="tt" style="left:1282px;top:423px;color:#1a90d5">0</div>
<div class="abs" style="left:0;top:479px;width:1473px;height:1px;background:#dfe1e4"></div>
<svg class="abs" style="left:4px;top:458px" width="7" height="11" viewBox="0 0 7 11"><path d="M0.5 0.5 L6.5 5.5 L0.5 10.5 Z" fill="#1a8fd3"/></svg>
<svg class="abs" style="left:18px;top:457px" width="71" height="12"><rect x="0" y="0" width="6" height="6" fill="#bfe0f2"/><rect x="0" y="6" width="6" height="6" fill="#98cbea"/><rect x="6" y="0" width="6" height="6" fill="#d6ebf6"/><rect x="6" y="6" width="6" height="6" fill="#a8d4ee"/><rect x="12" y="0" width="6" height="6" fill="#e4f2f9"/><rect x="12" y="6" width="6" height="6" fill="#bfe0f2"/><rect x="18" y="0" width="6" height="6" fill="#e4f2f9"/><rect x="18" y="6" width="6" height="6" fill="#98cbea"/><rect x="24" y="0" width="6" height="6" fill="#d6ebf6"/><rect x="24" y="6" width="6" height="6" fill="#bfe0f2"/><rect x="30" y="0" width="6" height="6" fill="#98cbea"/><rect x="30" y="6" width="6" height="6" fill="#98cbea"/><rect x="36" y="0" width="6" height="6" fill="#e4f2f9"/><rect x="36" y="6" width="6" height="6" fill="#98cbea"/><rect x="42" y="0" width="6" height="6" fill="#a8d4ee"/><rect x="42" y="6" width="6" height="6" fill="#98cbea"/><rect x="48" y="0" width="6" height="6" fill="#d6ebf6"/><rect x="48" y="6" width="6" height="6" fill="#98cbea"/><rect x="54" y="0" width="6" height="6" fill="#b4daf0"/><rect x="54" y="6" width="6" height="6" fill="#b4daf0"/><rect x="60" y="0" width="6" height="6" fill="#a8d4ee"/><rect x="60" y="6" width="6" height="6" fill="#a8d4ee"/><rect x="66" y="0" width="6" height="6" fill="#e4f2f9"/><rect x="66" y="6" width="6" height="6" fill="#d6ebf6"/></svg>
<div class="tt" style="left:94px;top:455px;color:#1a90d5">01:06:01.722.729182</div>
<div class="tt" style="left:254px;top:455px;color:#1a90d5">Trader426 (67644)</div>
<div class="tt" style="left:473px;top:455px;color:#1a90d5">0f8b0c8c-475e-4c98-925f-c8817b0d894c</div>
<div class="tt" style="left:785px;top:455px;color:#1a90d5">FIrnTfu7r56AMT6xp7pnZw</div>
<div class="tt" style="left:1023px;top:455px;color:#1a90d5">Cancel</div>
<div class="tt" style="left:1085px;top:455px;color:#1a90d5">Buy</div>
<div class="tt" style="left:1135px;top:455px;color:#1a90d5">375.55</div>
<div class="tt" style="left:1194px;top:455px;color:#1a90d5">5</div>
<div class="tt" style="left:1282px;top:455px;color:#1a90d5">0</div>
<div class="abs" style="left:15px;top:0;width:1px;height:475px;background:#dcdcdc"></div>
<div class="abs" style="left:248px;top:0;width:1px;height:475px;background:#dcdcdc"></div>
<div class="abs" style="left:389px;top:0;width:1px;height:475px;background:#dcdcdc"></div>
<div class="abs" style="left:468px;top:0;width:1px;height:475px;background:#dcdcdc"></div>
<div class="abs" style="left:780px;top:0;width:1px;height:475px;background:#dcdcdc"></div>
<div class="abs" style="left:1018px;top:0;width:1px;height:475px;background:#dcdcdc"></div>
<div class="abs" style="left:1080px;top:0;width:1px;height:475px;background:#dcdcdc"></div>
<div class="abs" style="left:1130px;top:0;width:1px;height:475px;background:#dcdcdc"></div>
<div class="abs" style="left:1189px;top:0;width:1px;height:475px;background:#dcdcdc"></div>
<div class="abs" style="left:1277px;top:0;width:1px;height:475px;background:#dcdcdc"></div>
<div class="abs" style="left:1375px;top:0;width:1px;height:475px;background:#dcdcdc"></div>
</div>
<div class="abs" style="left:1834px;top:665px;width:23px;height:475px;background:#f0f0f0"></div>
<div class="abs" style="left:1836px;top:689px;width:20px;height:80px;background:#bcbcbc"></div>
<div class="abs" style="left:1840px;top:674px;width:0;height:0;border-left:6px solid transparent;border-right:6px solid transparent;border-bottom:6px solid #bbb"></div>
<div class="abs" style="left:1840px;top:1123px;width:0;height:0;border-left:6px solid transparent;border-right:6px solid transparent;border-top:6px solid #555"></div>
<div class="abs" style="left:361px;top:1140px;width:1473px;height:24px;background:#f0f0f0"></div>
<div class="abs" style="left:385px;top:1142px;width:808px;height:20px;background:#bcbcbc"></div>
<div class="abs" style="left:369px;top:1146px;width:0;height:0;border-top:6px solid transparent;border-bottom:6px solid transparent;border-right:6px solid #aaa"></div>
<div class="abs" style="left:1819px;top:1146px;width:0;height:0;border-top:6px solid transparent;border-bottom:6px solid transparent;border-left:6px solid #333"></div>
<div class="abs" style="left:1834px;top:1140px;width:24px;height:24px;background:#e3e3e3"></div>
</body></html>
